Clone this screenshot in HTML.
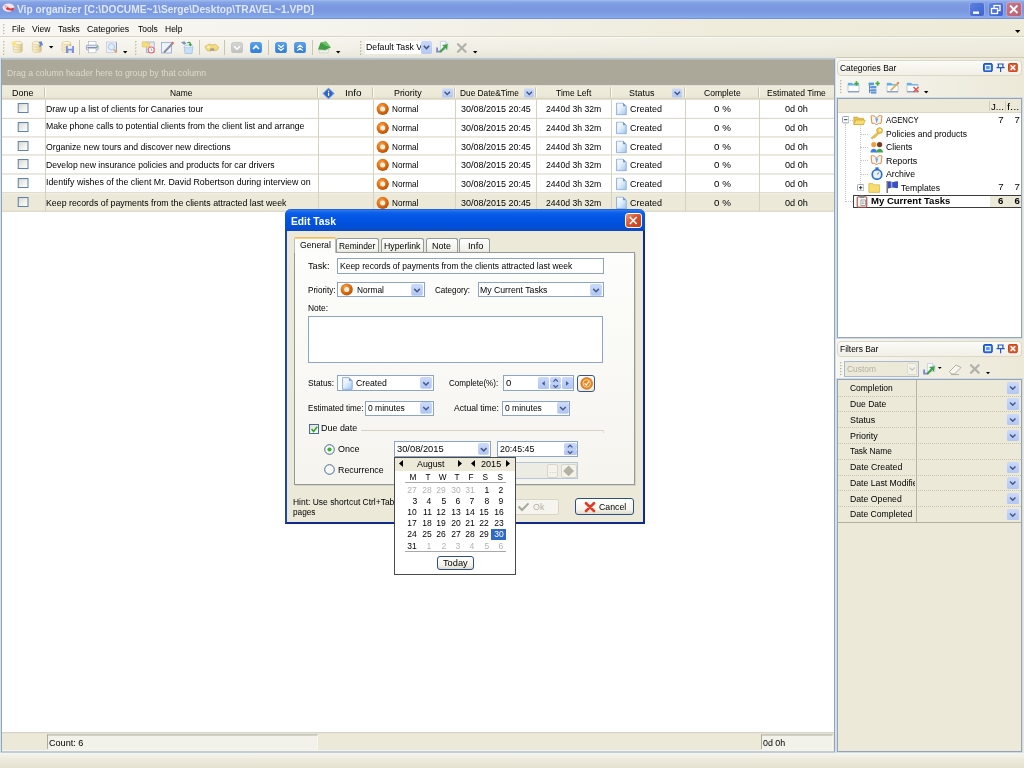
<!DOCTYPE html>
<html><head><meta charset="utf-8"><title>Vip organizer</title>
<style>
html,body{margin:0;padding:0;}
body{width:1024px;height:768px;overflow:hidden;background:#ece9d8;font-family:"Liberation Sans",sans-serif;position:relative;}
#r{position:absolute;left:0;top:0;width:1024px;height:768px;overflow:hidden;will-change:transform;}
#r div,#r span,#r svg{position:absolute;box-sizing:border-box;}
#r span{display:block;}
</style></head><body><div id="r">
<div style="left:0px;top:0px;width:1024px;height:19px;background:linear-gradient(#a3bdee 0,#86a5e6 2px,#7b98e0 6px,#7a97df 11px,#80a2e6 15px,#86aaea 17.6px,#7492da 18.4px,#7492da 19px);"></div>
<span style="left:16.75px;top:3px;font-size:10px;line-height:13px;color:#dfe8fa;white-space:pre;font-weight:bold;transform:scaleX(1.0190);transform-origin:0 50%;">Vip organizer [C:\DOCUME~1\Serge\Desktop\TRAVEL~1.VPD]</span>
<svg style="left:1.5px;top:3.2px;" width="14" height="10" viewBox="0 0 14 10"><ellipse cx="6.5" cy="4.6" rx="6" ry="4.2" fill="#f1e4ea"/><path d="M2.5 2.6 L8.5 5.6 L12.5 4.6 L11 8 L4.5 6.8 Z" fill="#d63a44"/><circle cx="4" cy="3.6" r="1.6" fill="#eeb4bc"/></svg>
<div style="left:969px;top:2px;width:15.5px;height:14.5px;background:linear-gradient(135deg,#5b82e0,#3f62cf);border:1px solid rgba(200,214,245,.55);border-radius:3px;"></div>
<svg style="left:969px;top:2px;" width="15.5" height="14.5" viewBox="0 0 15.5 14.5"><rect x="4" y="9.5" width="6" height="2.4" fill="#fff"/></svg>
<div style="left:988px;top:2px;width:15.5px;height:14.5px;background:linear-gradient(135deg,#5b82e0,#3f62cf);border:1px solid rgba(200,214,245,.55);border-radius:3px;"></div>
<svg style="left:988px;top:2px;" width="15.5" height="14.5" viewBox="0 0 15.5 14.5"><rect x="6" y="3.5" width="6" height="5" fill="none" stroke="#fff" stroke-width="1.3"/><rect x="3.5" y="6.5" width="6" height="5" fill="#4a70d8" stroke="#fff" stroke-width="1.3"/></svg>
<div style="left:1006px;top:2px;width:15.5px;height:14.5px;background:linear-gradient(135deg,#c9788c,#b85e72);border:1px solid rgba(200,214,245,.55);border-radius:3px;"></div>
<svg style="left:1006px;top:2px;" width="15.5" height="14.5" viewBox="0 0 15.5 14.5"><path d="M4 3.5 L11.5 11 M11.5 3.5 L4 11" stroke="#fff" stroke-width="1.8"/></svg>
<div style="left:0px;top:19px;width:1024px;height:18px;background:linear-gradient(90deg,#f8f7f3 0,#f4f3ec 35%,#efecdc 70%,#eeebd9 100%);"></div>
<div style="left:0px;top:36px;width:1024px;height:1px;background:#d9d5c3;"></div>
<div style="left:0px;top:37px;width:1024px;height:1px;background:#fbfaf6;"></div>
<svg style="left:3.4px;top:24.2px;" width="3" height="13" viewBox="0 0 3 13"><rect x=".2" y="0.20" width="1.3" height="1.3" fill="#aeaa97"/><rect x="1" y="1.00" width="1" height="1" fill="#fff" opacity=".8"/><rect x=".2" y="3.10" width="1.3" height="1.3" fill="#aeaa97"/><rect x="1" y="3.90" width="1" height="1" fill="#fff" opacity=".8"/><rect x=".2" y="6.00" width="1.3" height="1.3" fill="#aeaa97"/><rect x="1" y="6.80" width="1" height="1" fill="#fff" opacity=".8"/><rect x=".2" y="8.90" width="1.3" height="1.3" fill="#aeaa97"/><rect x="1" y="9.70" width="1" height="1" fill="#fff" opacity=".8"/></svg>
<span style="left:11.75px;top:23px;font-size:9.6px;line-height:12px;color:#000;white-space:pre;transform:scaleX(0.8339);transform-origin:0 50%;">File</span>
<span style="left:32.15px;top:23px;font-size:9.6px;line-height:12px;color:#000;white-space:pre;transform:scaleX(0.8868);transform-origin:0 50%;">View</span>
<span style="left:57.95px;top:23px;font-size:9.6px;line-height:12px;color:#000;white-space:pre;transform:scaleX(0.8843);transform-origin:0 50%;">Tasks</span>
<span style="left:87.45px;top:23px;font-size:9.6px;line-height:12px;color:#000;white-space:pre;transform:scaleX(0.9090);transform-origin:0 50%;">Categories</span>
<span style="left:137.65px;top:23px;font-size:9.6px;line-height:12px;color:#000;white-space:pre;transform:scaleX(0.8835);transform-origin:0 50%;">Tools</span>
<span style="left:164.75px;top:23px;font-size:9.6px;line-height:12px;color:#000;white-space:pre;transform:scaleX(0.8863);transform-origin:0 50%;">Help</span>
<svg style="left:1015px;top:29.5px;" width="6" height="4" viewBox="0 0 6 4"><path d="M0 0 H5.4 L2.7 3 Z" fill="#000"/></svg>
<div style="left:0px;top:38px;width:1024px;height:20px;background:linear-gradient(#f4f3ea 0,#efede2 60%,#e6e3d2 100%);"></div>
<div style="left:0px;top:38px;width:1024px;height:20px;background:linear-gradient(90deg,rgba(255,255,255,.35) 0,rgba(255,255,255,.05) 45%,rgba(236,233,216,.5) 100%);"></div>
<div style="left:0px;top:57px;width:1024px;height:1px;background:#cfcab6;"></div>
<svg style="left:3.2px;top:41.3px;" width="3" height="17.5" viewBox="0 0 3 17.5"><rect x=".2" y="0.20" width="1.3" height="1.3" fill="#a9a592"/><rect x="1" y="1.00" width="1" height="1" fill="#fbfaf6" opacity=".8"/><rect x=".2" y="3.30" width="1.3" height="1.3" fill="#a9a592"/><rect x="1" y="4.10" width="1" height="1" fill="#fbfaf6" opacity=".8"/><rect x=".2" y="6.40" width="1.3" height="1.3" fill="#a9a592"/><rect x="1" y="7.20" width="1" height="1" fill="#fbfaf6" opacity=".8"/><rect x=".2" y="9.50" width="1.3" height="1.3" fill="#a9a592"/><rect x="1" y="10.30" width="1" height="1" fill="#fbfaf6" opacity=".8"/><rect x=".2" y="12.60" width="1.3" height="1.3" fill="#a9a592"/><rect x="1" y="13.40" width="1" height="1" fill="#fbfaf6" opacity=".8"/></svg>
<svg style="left:10px;top:40px;" width="14" height="15" viewBox="0 0 14 15"><g transform="translate(2.9,1)"><defs><linearGradient id="dbg" x1="0" y1="0" x2="1" y2="0"><stop offset="0" stop-color="#fbf5dc"/><stop offset=".55" stop-color="#f2e4b2"/><stop offset="1" stop-color="#d6c18a"/></linearGradient></defs><path d="M0.4 2 V10 C0.4 12 9.4 12 9.4 10 V2 Z" fill="url(#dbg)" stroke="#cdbb88" stroke-width=".5"/><ellipse cx="4.9" cy="2" rx="4.5" ry="1.7" fill="#fbf4d6" stroke="#cdbb88" stroke-width=".5"/><path d="M0.4 4.9 C0.4 6.6 9.4 6.6 9.4 4.9 M0.4 7.6 C0.4 9.3 9.4 9.3 9.4 7.6" fill="none" stroke="#d4c392" stroke-width=".55"/></g><circle cx="3.8" cy="3.6" r="2.3" fill="#f8e678" opacity=".9"/></svg>
<svg style="left:30px;top:40px;" width="15" height="15" viewBox="0 0 15 15"><g transform="translate(2,1)"><defs><linearGradient id="dbg" x1="0" y1="0" x2="1" y2="0"><stop offset="0" stop-color="#fbf5dc"/><stop offset=".55" stop-color="#f2e4b2"/><stop offset="1" stop-color="#d6c18a"/></linearGradient></defs><path d="M0.4 2 V10 C0.4 12 9.4 12 9.4 10 V2 Z" fill="url(#dbg)" stroke="#cdbb88" stroke-width=".5"/><ellipse cx="4.9" cy="2" rx="4.5" ry="1.7" fill="#fbf4d6" stroke="#cdbb88" stroke-width=".5"/><path d="M0.4 4.9 C0.4 6.6 9.4 6.6 9.4 4.9 M0.4 7.6 C0.4 9.3 9.4 9.3 9.4 7.6" fill="none" stroke="#d4c392" stroke-width=".55"/></g><path d="M8.2 2.2 L11.6 1.2 L13.2 5.4 L11.6 5 L10.4 7 L9 6.2 L10.2 4.2 Z" fill="#5f86d2"/></svg>
<svg style="left:48.6px;top:45.6px;" width="5.4" height="3.6" viewBox="0 0 5.4 3.6"><path d="M0 0 H4.4 L2.2 2.6 Z" fill="#000"/></svg>
<svg style="left:60px;top:40px;" width="16" height="15" viewBox="0 0 16 15"><g transform="translate(1.6,1)"><defs><linearGradient id="dbg" x1="0" y1="0" x2="1" y2="0"><stop offset="0" stop-color="#fbf5dc"/><stop offset=".55" stop-color="#f2e4b2"/><stop offset="1" stop-color="#d6c18a"/></linearGradient></defs><path d="M0.4 2 V10 C0.4 12 9.4 12 9.4 10 V2 Z" fill="url(#dbg)" stroke="#cdbb88" stroke-width=".5"/><ellipse cx="4.9" cy="2" rx="4.5" ry="1.7" fill="#fbf4d6" stroke="#cdbb88" stroke-width=".5"/><path d="M0.4 4.9 C0.4 6.6 9.4 6.6 9.4 4.9 M0.4 7.6 C0.4 9.3 9.4 9.3 9.4 7.6" fill="none" stroke="#d4c392" stroke-width=".55"/></g><rect x="6" y="6" width="8" height="7" fill="#7f8fd8"/><rect x="7.8" y="6" width="4.4" height="2.8" fill="#eef0fa"/><rect x="8.4" y="10.4" width="3.4" height="2.6" fill="#e4e8f6"/></svg>
<div style="left:79px;top:40px;width:1px;height:15px;background:#c9c5b2;"></div>
<svg style="left:85px;top:40px;" width="15" height="15" viewBox="0 0 15 15"><rect x="3.6" y="1.6" width="7.4" height="4" fill="#fff" stroke="#a8b2cc" stroke-width=".6"/><rect x="1.4" y="5.2" width="11.8" height="4.6" rx=".8" fill="#e6eaf3" stroke="#7f8db4" stroke-width=".7"/><path d="M2.4 7.6 H12.2" stroke="#6a78a4" stroke-width=".9"/><rect x="3.6" y="8.6" width="7.4" height="4.2" fill="#fff" stroke="#a8b2cc" stroke-width=".6"/><rect x="11.4" y="5.8" width="1.6" height="1.4" fill="#74c866"/></svg>
<svg style="left:105px;top:40px;" width="15" height="15" viewBox="0 0 15 15"><rect x="1.6" y="2" width="10" height="10.6" fill="#eef1f8" stroke="#b4bdd6" stroke-width=".6"/><path d="M11.4 2.4 V12.4" stroke="#7d88aa" stroke-width=".8"/><circle cx="6.4" cy="6.8" r="3.2" fill="#dcecf8" stroke="#a4c2e2" stroke-width=".9"/><path d="M8.8 9.6 L11.6 12.4" stroke="#e0a868" stroke-width="1.7"/></svg>
<svg style="left:123.4px;top:50.8px;" width="5.4" height="3.4" viewBox="0 0 5.4 3.4"><path d="M0 0 H4.4 L2.2 2.4 Z" fill="#000"/></svg>
<svg style="left:134.6px;top:41.3px;" width="3" height="17.5" viewBox="0 0 3 17.5"><rect x=".2" y="0.20" width="1.3" height="1.3" fill="#a9a592"/><rect x="1" y="1.00" width="1" height="1" fill="#fbfaf6" opacity=".8"/><rect x=".2" y="3.30" width="1.3" height="1.3" fill="#a9a592"/><rect x="1" y="4.10" width="1" height="1" fill="#fbfaf6" opacity=".8"/><rect x=".2" y="6.40" width="1.3" height="1.3" fill="#a9a592"/><rect x="1" y="7.20" width="1" height="1" fill="#fbfaf6" opacity=".8"/><rect x=".2" y="9.50" width="1.3" height="1.3" fill="#a9a592"/><rect x="1" y="10.30" width="1" height="1" fill="#fbfaf6" opacity=".8"/><rect x=".2" y="12.60" width="1.3" height="1.3" fill="#a9a592"/><rect x="1" y="13.40" width="1" height="1" fill="#fbfaf6" opacity=".8"/></svg>
<svg style="left:141px;top:40px;" width="15" height="15" viewBox="0 0 15 15"><rect x="5.6" y="2" width="7.6" height="10.6" fill="#e4e9f6" stroke="#93a3cc" stroke-width=".7"/><path d="M1.2 1.8 H5 L6 2.8 H8.8 V7 H1.2 Z" fill="#f4dd7a" stroke="#d4ba5c" stroke-width=".5"/><circle cx="10.2" cy="10" r="3" fill="#fff" stroke="#e66a74" stroke-width="1.1"/><path d="M10.2 8.4 V10.1 H11.4" stroke="#666" stroke-width=".6" fill="none"/></svg>
<svg style="left:160px;top:40px;" width="15" height="15" viewBox="0 0 15 15"><rect x="1.5" y="2.5" width="10" height="10.5" fill="#eef2fb" stroke="#8fa6d2" stroke-width=".8"/><path d="M4 11 L11.5 3 L13 4.4 L5.6 12.2 Z" fill="#8a8f9e"/><path d="M11.5 3 L12.6 1.6 L14 3 L13 4.4 Z" fill="#e2574c"/><path d="M4 11 L3.6 12.6 L5.6 12.2 Z" fill="#444"/></svg>
<svg style="left:180px;top:40px;" width="15" height="15" viewBox="0 0 15 15"><path d="M4 6.5 H13 L12 13.5 H5 Z" fill="#c9e0f4" stroke="#8db4dc" stroke-width=".6"/><ellipse cx="8.5" cy="6.5" rx="4.5" ry="1.3" fill="#e6f1fb" stroke="#8db4dc" stroke-width=".5"/><path d="M1 2.2 L4.5 1.2 L6.5 4 L4 4.8 Z" fill="#7f94c4"/><path d="M7 2.5 C9 0.8 11.5 2 11 4.2 L12.3 4.2 L10.3 6.4 L8.4 4.2 L9.6 4.2 C9.8 3 8.6 2.6 7.6 3.4 Z" fill="#3fa04a"/></svg>
<div style="left:199px;top:40px;width:1px;height:15px;background:#c9c5b2;"></div>
<svg style="left:204px;top:43px;" width="16" height="10" viewBox="0 0 16 10"><path d="M1 3.6 L5.4 1 L8.2 2 L11.4 1.2 L14.6 4 L13.6 6.8 L10.4 8 L8.4 6 L6.6 8.2 L3 7.6 Z" fill="#f3da7c" stroke="#c9a94e" stroke-width=".6"/><ellipse cx="8.2" cy="6.4" rx="2.4" ry="1.5" fill="#a9a48e"/><ellipse cx="4.4" cy="4.2" rx="1.6" ry="1.1" fill="#fbf0b8"/></svg>
<div style="left:224px;top:40px;width:1px;height:15px;background:#c9c5b2;"></div>
<svg style="left:231px;top:41.5px;" width="12" height="11.5" viewBox="0 0 12 11.5"><defs><linearGradient id="sq1" x1="0" y1="0" x2="0" y2="1"><stop offset="0" stop-color="#d6d6d6"/><stop offset="1" stop-color="#c0c0c0"/></linearGradient></defs><rect x=".5" y=".5" width="11" height="10.5" rx="2" fill="url(#sq1)" stroke="#c2c2c2" stroke-width=".8"/><path d="M3 4.2 L6 7.2 L9 4.2" fill="none" stroke="#fff" stroke-width="1.6"/></svg>
<svg style="left:250px;top:41.5px;" width="12" height="11.5" viewBox="0 0 12 11.5"><defs><linearGradient id="sq2" x1="0" y1="0" x2="0" y2="1"><stop offset="0" stop-color="#5aa4ee"/><stop offset="1" stop-color="#2d7bd6"/></linearGradient></defs><rect x=".5" y=".5" width="11" height="10.5" rx="2" fill="url(#sq2)" stroke="#4a8cdc" stroke-width=".8"/><path d="M3 7 L6 4 L9 7" fill="none" stroke="#fff" stroke-width="1.6"/></svg>
<div style="left:268px;top:40px;width:1px;height:15px;background:#c9c5b2;"></div>
<svg style="left:275px;top:41.5px;" width="12" height="11.5" viewBox="0 0 12 11.5"><defs><linearGradient id="sq3" x1="0" y1="0" x2="0" y2="1"><stop offset="0" stop-color="#5aa4ee"/><stop offset="1" stop-color="#2d7bd6"/></linearGradient></defs><rect x=".5" y=".5" width="11" height="10.5" rx="2" fill="url(#sq3)" stroke="#4a8cdc" stroke-width=".8"/><path d="M3.2 3 L6 5.4 L8.8 3 M3.2 6 L6 8.4 L8.8 6" fill="none" stroke="#fff" stroke-width="1.2"/></svg>
<svg style="left:294px;top:41.5px;" width="12" height="11.5" viewBox="0 0 12 11.5"><defs><linearGradient id="sq4" x1="0" y1="0" x2="0" y2="1"><stop offset="0" stop-color="#5aa4ee"/><stop offset="1" stop-color="#2d7bd6"/></linearGradient></defs><rect x=".5" y=".5" width="11" height="10.5" rx="2" fill="url(#sq4)" stroke="#4a8cdc" stroke-width=".8"/><path d="M3.2 5.6 L6 3.2 L8.8 5.6 M3.2 8.6 L6 6.2 L8.8 8.6" fill="none" stroke="#fff" stroke-width="1.2"/></svg>
<div style="left:312px;top:40px;width:1px;height:15px;background:#c9c5b2;"></div>
<svg style="left:317px;top:41px;" width="15" height="13" viewBox="0 0 15 13"><path d="M1 8.6 L3.6 1.6 L9 .6 L13.8 6.6 L8.4 9 Z" fill="#3f9e42"/><path d="M3.6 1.6 L9 .6 L13.8 6.6 L8.6 4.6 Z" fill="#6cc466"/><path d="M1.6 9 L8.4 9.4 L12 7.8 L11 12 L2.6 11.8 Z" fill="#f0f2ee" stroke="#b4bcb0" stroke-width=".5"/></svg>
<svg style="left:336px;top:50.8px;" width="5.4" height="3.4" viewBox="0 0 5.4 3.4"><path d="M0 0 H4.4 L2.2 2.4 Z" fill="#000"/></svg>
<svg style="left:359.6px;top:41.3px;" width="3" height="17.5" viewBox="0 0 3 17.5"><rect x=".2" y="0.20" width="1.3" height="1.3" fill="#a9a592"/><rect x="1" y="1.00" width="1" height="1" fill="#fbfaf6" opacity=".8"/><rect x=".2" y="3.30" width="1.3" height="1.3" fill="#a9a592"/><rect x="1" y="4.10" width="1" height="1" fill="#fbfaf6" opacity=".8"/><rect x=".2" y="6.40" width="1.3" height="1.3" fill="#a9a592"/><rect x="1" y="7.20" width="1" height="1" fill="#fbfaf6" opacity=".8"/><rect x=".2" y="9.50" width="1.3" height="1.3" fill="#a9a592"/><rect x="1" y="10.30" width="1" height="1" fill="#fbfaf6" opacity=".8"/><rect x=".2" y="12.60" width="1.3" height="1.3" fill="#a9a592"/><rect x="1" y="13.40" width="1" height="1" fill="#fbfaf6" opacity=".8"/></svg>
<div style="left:364.5px;top:40.5px;width:67.5px;height:13.5px;background:#fff;"></div>
<div style="left:364.5px;top:40px;width:56px;height:14px;overflow:hidden;"><span style="left:1.2px;top:1px;font-size:9.6px;line-height:12px;white-space:pre;color:#000;transform:scaleX(0.9098);transform-origin:0 50%;">Default Task View</span></div>
<div style="left:420.5px;top:41px;width:11px;height:12.5px;background:linear-gradient(#c8d7fa,#b4c8f4);border-radius:1.5px;"></div>
<svg style="left:420.5px;top:41px;" width="11" height="12.5" viewBox="0 0 11 12.5"><path d="M2.8 4.8 L5.5 7.6 L8.2 4.8" fill="none" stroke="#40557f" stroke-width="1.5"/></svg>
<svg style="left:435px;top:40px;" width="15" height="15" viewBox="0 0 15 15"><path d="M5.4 1.4 H10.6 L12.8 3.6 V9.6 H5.4 Z" fill="#f6f8fc" stroke="#b4bed8" stroke-width=".6"/><path d="M10.6 1.4 V3.6 H12.8" fill="#dfe6f4" stroke="#b4bed8" stroke-width=".5"/><path d="M1.2 7.6 V12.6 H5.8 V10.8 H3 V7.6 Z" fill="#7f84d6"/><path d="M4.6 11.2 L9 6.6 L7.4 5.2 L12.6 4.2 L11.8 9.4 L10.4 8 L6 12.6 Z" fill="#3fa646" stroke="#2f8a36" stroke-width=".3"/></svg>
<svg style="left:455.5px;top:41.5px;" width="12" height="12" viewBox="0 0 12 12"><path d="M2 2.2 L9.6 9.8 M9.6 2.2 L2 9.8" stroke="#b2b2ac" stroke-width="2.3" stroke-linecap="round"/></svg>
<svg style="left:473px;top:50.8px;" width="5.4" height="3.4" viewBox="0 0 5.4 3.4"><path d="M0 0 H4.4 L2.2 2.4 Z" fill="#000"/></svg>
<div style="left:0;top:0;width:1024px;height:768px;transform:translateY(0.45px);">
<div style="left:0px;top:57px;width:836px;height:696px;background:#fff;border:1px solid #d6e1ee;"></div>
<div style="left:1px;top:58px;width:834px;height:694px;border:1px solid #94a4b5;"></div>
<div style="left:2px;top:59px;width:832px;height:26px;background:#aca899;"></div>
<span style="left:7.25px;top:67px;font-size:9.6px;line-height:12px;color:#dcd9cb;white-space:pre;transform:scaleX(0.9060);transform-origin:0 50%;">Drag a column header here to group by that column</span>
<div style="left:2px;top:85px;width:832px;height:14px;background:linear-gradient(#efecdd 0,#ece9d8 70%,#e2decb 100%);"></div>
<div style="left:2px;top:98px;width:832px;height:1px;background:#d0ccb9;"></div>
<div style="left:44px;top:87px;width:1px;height:10px;background:#c8c4b0;"></div>
<div style="left:45px;top:87px;width:1px;height:10px;background:#fbfaf5;"></div>
<div style="left:317px;top:87px;width:1px;height:10px;background:#c8c4b0;"></div>
<div style="left:318px;top:87px;width:1px;height:10px;background:#fbfaf5;"></div>
<div style="left:372px;top:87px;width:1px;height:10px;background:#c8c4b0;"></div>
<div style="left:373px;top:87px;width:1px;height:10px;background:#fbfaf5;"></div>
<div style="left:454px;top:87px;width:1px;height:10px;background:#c8c4b0;"></div>
<div style="left:455px;top:87px;width:1px;height:10px;background:#fbfaf5;"></div>
<div style="left:535px;top:87px;width:1px;height:10px;background:#c8c4b0;"></div>
<div style="left:536px;top:87px;width:1px;height:10px;background:#fbfaf5;"></div>
<div style="left:610px;top:87px;width:1px;height:10px;background:#c8c4b0;"></div>
<div style="left:611px;top:87px;width:1px;height:10px;background:#fbfaf5;"></div>
<div style="left:683.5px;top:87px;width:1px;height:10px;background:#c8c4b0;"></div>
<div style="left:684.5px;top:87px;width:1px;height:10px;background:#fbfaf5;"></div>
<div style="left:757.5px;top:87px;width:1px;height:10px;background:#c8c4b0;"></div>
<div style="left:758.5px;top:87px;width:1px;height:10px;background:#fbfaf5;"></div>
<span style="left:12.25px;top:87px;font-size:9.6px;line-height:12px;color:#000;white-space:pre;transform:scaleX(0.9324);transform-origin:0 50%;">Done</span>
<span style="left:170.25px;top:87px;font-size:9.6px;line-height:12px;color:#000;white-space:pre;transform:scaleX(0.8747);transform-origin:0 50%;">Name</span>
<span style="left:344.75px;top:87px;font-size:9.6px;line-height:12px;color:#000;white-space:pre;transform:scaleX(1.0429);transform-origin:0 50%;">Info</span>
<span style="left:393.55px;top:87px;font-size:9.6px;line-height:12px;color:#000;white-space:pre;transform:scaleX(0.9240);transform-origin:0 50%;">Priority</span>
<span style="left:459.75px;top:87px;font-size:9.6px;line-height:12px;color:#000;white-space:pre;transform:scaleX(0.8670);transform-origin:0 50%;">Due Date&amp;Time</span>
<span style="left:556.35px;top:87px;font-size:9.6px;line-height:12px;color:#000;white-space:pre;transform:scaleX(0.8901);transform-origin:0 50%;">Time Left</span>
<span style="left:628.75px;top:87px;font-size:9.6px;line-height:12px;color:#000;white-space:pre;transform:scaleX(0.9333);transform-origin:0 50%;">Status</span>
<span style="left:703.75px;top:87px;font-size:9.6px;line-height:12px;color:#000;white-space:pre;transform:scaleX(0.8932);transform-origin:0 50%;">Complete</span>
<span style="left:766.75px;top:87px;font-size:9.6px;line-height:12px;color:#000;white-space:pre;transform:scaleX(0.8903);transform-origin:0 50%;">Estimated Time</span>
<div style="left:442px;top:88px;width:10.5px;height:9px;background:linear-gradient(#cbd9fb,#b3c7f3);border-radius:1.5px;"></div>
<svg style="left:442px;top:88px;" width="10.5" height="9" viewBox="0 0 10.5 9"><path d="M2.55 3.4 L5.25 6.1 L7.95 3.4" fill="none" stroke="#3f5584" stroke-width="1.4"/></svg>
<div style="left:523.7px;top:88px;width:10.5px;height:9px;background:linear-gradient(#cbd9fb,#b3c7f3);border-radius:1.5px;"></div>
<svg style="left:523.7px;top:88px;" width="10.5" height="9" viewBox="0 0 10.5 9"><path d="M2.55 3.4 L5.25 6.1 L7.95 3.4" fill="none" stroke="#3f5584" stroke-width="1.4"/></svg>
<div style="left:671.5px;top:88px;width:10.5px;height:9px;background:linear-gradient(#cbd9fb,#b3c7f3);border-radius:1.5px;"></div>
<svg style="left:671.5px;top:88px;" width="10.5" height="9" viewBox="0 0 10.5 9"><path d="M2.55 3.4 L5.25 6.1 L7.95 3.4" fill="none" stroke="#3f5584" stroke-width="1.4"/></svg>
<svg style="left:321.5px;top:86.5px;" width="13" height="12" viewBox="0 0 13 12"><path d="M6.5 .5 L12.3 6 L6.5 11.5 L.7 6 Z" fill="#3f78d8" stroke="#9bb8ec" stroke-width=".8"/><circle cx="6.5" cy="6" r="3.2" fill="#2b5fc4"/><rect x="5.9" y="5.2" width="1.3" height="3.2" fill="#fff"/><rect x="5.9" y="3.3" width="1.3" height="1.2" fill="#fff"/></svg>
<div style="left:2px;top:117px;width:832px;height:1px;background:#d6d2c2;transform:translateY(0.4px);"></div>
<svg style="left:16.5px;top:102.4px;" width="12" height="11.2" viewBox="0 0 12 11.2"><defs><linearGradient id="cb0" x1="0" y1="0" x2="1" y2="1"><stop offset="0" stop-color="#d8d8d0"/><stop offset=".6" stop-color="#f2f2ee"/><stop offset="1" stop-color="#ffffff"/></linearGradient></defs><rect x="1.2" y="1.1" width="9.8" height="9" fill="url(#cb0)" stroke="#5c7fa6" stroke-width="1"/></svg>
<span style="left:46.35px;top:103px;font-size:9.6px;line-height:12px;color:#000;white-space:pre;transform:scaleX(0.9099);transform-origin:0 50%;">Draw up a list of clients for Canaries tour</span>
<svg style="left:375.5px;top:102.2px;" width="13.5" height="13" viewBox="0 0 13.5 13"><defs><radialGradient id="og0" cx=".4" cy=".35" r=".7"><stop offset="0" stop-color="#f6a850"/><stop offset=".55" stop-color="#e07010"/><stop offset="1" stop-color="#b04c04"/></radialGradient></defs><circle cx="6.7" cy="6.5" r="6.1" fill="url(#og0)"/><circle cx="6.7" cy="6.5" r="2.5" fill="#fdf0e0"/></svg>
<span style="left:391.75px;top:103px;font-size:9.6px;line-height:12px;color:#000;white-space:pre;transform:scaleX(0.8533);transform-origin:0 50%;">Normal</span>
<span style="left:460.75px;top:103px;font-size:9.6px;line-height:12px;color:#000;white-space:pre;transform:scaleX(0.9353);transform-origin:0 50%;">30/08/2015 20:45</span>
<span style="left:546.45px;top:103px;font-size:9.6px;line-height:12px;color:#000;white-space:pre;transform:scaleX(0.8992);transform-origin:0 50%;">2440d 3h 32m</span>
<svg style="left:615.5px;top:102.2px;" width="11" height="13" viewBox="0 0 11 13"><defs><linearGradient id="dg0" x1="0" y1="0" x2="1" y2="1"><stop offset="0" stop-color="#ffffff"/><stop offset=".45" stop-color="#e4f0fc"/><stop offset="1" stop-color="#9cc6f0"/></linearGradient></defs><path d="M.6 .6 H7 L10.2 3.8 V12.3 H.6 Z" fill="url(#dg0)" stroke="#86a8d8" stroke-width=".9"/><path d="M7 .6 L10.2 3.8 H7 Z" fill="#6f9ad6"/></svg>
<span style="left:629.75px;top:103px;font-size:9.6px;line-height:12px;color:#000;white-space:pre;transform:scaleX(0.9340);transform-origin:0 50%;">Created</span>
<span style="left:713.55px;top:103px;font-size:9.6px;line-height:12px;color:#000;white-space:pre;transform:scaleX(1.0216);transform-origin:0 50%;">0 %</span>
<span style="left:784.75px;top:103px;font-size:9.6px;line-height:12px;color:#000;white-space:pre;transform:scaleX(0.9532);transform-origin:0 50%;">0d 0h</span>
<div style="left:2px;top:136px;width:832px;height:1px;background:#d6d2c2;transform:translateY(0px);"></div>
<svg style="left:16.5px;top:121.4px;" width="12" height="11.2" viewBox="0 0 12 11.2"><defs><linearGradient id="cb1" x1="0" y1="0" x2="1" y2="1"><stop offset="0" stop-color="#d8d8d0"/><stop offset=".6" stop-color="#f2f2ee"/><stop offset="1" stop-color="#ffffff"/></linearGradient></defs><rect x="1.2" y="1.1" width="9.8" height="9" fill="url(#cb1)" stroke="#5c7fa6" stroke-width="1"/></svg>
<span style="left:46.35px;top:120px;font-size:9.6px;line-height:12px;color:#000;white-space:pre;transform:scaleX(0.9041);transform-origin:0 50%;">Make phone calls to potential clients from the client list and arrange</span>
<svg style="left:375.5px;top:121.2px;" width="13.5" height="13" viewBox="0 0 13.5 13"><defs><radialGradient id="og1" cx=".4" cy=".35" r=".7"><stop offset="0" stop-color="#f6a850"/><stop offset=".55" stop-color="#e07010"/><stop offset="1" stop-color="#b04c04"/></radialGradient></defs><circle cx="6.7" cy="6.5" r="6.1" fill="url(#og1)"/><circle cx="6.7" cy="6.5" r="2.5" fill="#fdf0e0"/></svg>
<span style="left:391.75px;top:122px;font-size:9.6px;line-height:12px;color:#000;white-space:pre;transform:scaleX(0.8533);transform-origin:0 50%;">Normal</span>
<span style="left:460.75px;top:122px;font-size:9.6px;line-height:12px;color:#000;white-space:pre;transform:scaleX(0.9353);transform-origin:0 50%;">30/08/2015 20:45</span>
<span style="left:546.45px;top:122px;font-size:9.6px;line-height:12px;color:#000;white-space:pre;transform:scaleX(0.8992);transform-origin:0 50%;">2440d 3h 32m</span>
<svg style="left:615.5px;top:121.2px;" width="11" height="13" viewBox="0 0 11 13"><defs><linearGradient id="dg1" x1="0" y1="0" x2="1" y2="1"><stop offset="0" stop-color="#ffffff"/><stop offset=".45" stop-color="#e4f0fc"/><stop offset="1" stop-color="#9cc6f0"/></linearGradient></defs><path d="M.6 .6 H7 L10.2 3.8 V12.3 H.6 Z" fill="url(#dg1)" stroke="#86a8d8" stroke-width=".9"/><path d="M7 .6 L10.2 3.8 H7 Z" fill="#6f9ad6"/></svg>
<span style="left:629.75px;top:122px;font-size:9.6px;line-height:12px;color:#000;white-space:pre;transform:scaleX(0.9340);transform-origin:0 50%;">Created</span>
<span style="left:713.55px;top:122px;font-size:9.6px;line-height:12px;color:#000;white-space:pre;transform:scaleX(1.0216);transform-origin:0 50%;">0 %</span>
<span style="left:784.75px;top:122px;font-size:9.6px;line-height:12px;color:#000;white-space:pre;transform:scaleX(0.9532);transform-origin:0 50%;">0d 0h</span>
<div style="left:2px;top:154px;width:832px;height:1px;background:#d6d2c2;transform:translateY(0px);"></div>
<svg style="left:16.5px;top:139.9px;" width="12" height="11.2" viewBox="0 0 12 11.2"><defs><linearGradient id="cb2" x1="0" y1="0" x2="1" y2="1"><stop offset="0" stop-color="#d8d8d0"/><stop offset=".6" stop-color="#f2f2ee"/><stop offset="1" stop-color="#ffffff"/></linearGradient></defs><rect x="1.2" y="1.1" width="9.8" height="9" fill="url(#cb2)" stroke="#5c7fa6" stroke-width="1"/></svg>
<span style="left:46.35px;top:141px;font-size:9.6px;line-height:12px;color:#000;white-space:pre;transform:scaleX(0.9042);transform-origin:0 50%;">Organize new tours and discover new directions</span>
<svg style="left:375.5px;top:139.7px;" width="13.5" height="13" viewBox="0 0 13.5 13"><defs><radialGradient id="og2" cx=".4" cy=".35" r=".7"><stop offset="0" stop-color="#f6a850"/><stop offset=".55" stop-color="#e07010"/><stop offset="1" stop-color="#b04c04"/></radialGradient></defs><circle cx="6.7" cy="6.5" r="6.1" fill="url(#og2)"/><circle cx="6.7" cy="6.5" r="2.5" fill="#fdf0e0"/></svg>
<span style="left:391.75px;top:141px;font-size:9.6px;line-height:12px;color:#000;white-space:pre;transform:scaleX(0.8533);transform-origin:0 50%;">Normal</span>
<span style="left:460.75px;top:141px;font-size:9.6px;line-height:12px;color:#000;white-space:pre;transform:scaleX(0.9353);transform-origin:0 50%;">30/08/2015 20:45</span>
<span style="left:546.45px;top:141px;font-size:9.6px;line-height:12px;color:#000;white-space:pre;transform:scaleX(0.8992);transform-origin:0 50%;">2440d 3h 32m</span>
<svg style="left:615.5px;top:139.7px;" width="11" height="13" viewBox="0 0 11 13"><defs><linearGradient id="dg2" x1="0" y1="0" x2="1" y2="1"><stop offset="0" stop-color="#ffffff"/><stop offset=".45" stop-color="#e4f0fc"/><stop offset="1" stop-color="#9cc6f0"/></linearGradient></defs><path d="M.6 .6 H7 L10.2 3.8 V12.3 H.6 Z" fill="url(#dg2)" stroke="#86a8d8" stroke-width=".9"/><path d="M7 .6 L10.2 3.8 H7 Z" fill="#6f9ad6"/></svg>
<span style="left:629.75px;top:141px;font-size:9.6px;line-height:12px;color:#000;white-space:pre;transform:scaleX(0.9340);transform-origin:0 50%;">Created</span>
<span style="left:713.55px;top:141px;font-size:9.6px;line-height:12px;color:#000;white-space:pre;transform:scaleX(1.0216);transform-origin:0 50%;">0 %</span>
<span style="left:784.75px;top:141px;font-size:9.6px;line-height:12px;color:#000;white-space:pre;transform:scaleX(0.9532);transform-origin:0 50%;">0d 0h</span>
<div style="left:2px;top:173px;width:832px;height:1px;background:#d6d2c2;transform:translateY(0px);"></div>
<svg style="left:16.5px;top:158.4px;" width="12" height="11.2" viewBox="0 0 12 11.2"><defs><linearGradient id="cb3" x1="0" y1="0" x2="1" y2="1"><stop offset="0" stop-color="#d8d8d0"/><stop offset=".6" stop-color="#f2f2ee"/><stop offset="1" stop-color="#ffffff"/></linearGradient></defs><rect x="1.2" y="1.1" width="9.8" height="9" fill="url(#cb3)" stroke="#5c7fa6" stroke-width="1"/></svg>
<span style="left:46.35px;top:159px;font-size:9.6px;line-height:12px;color:#000;white-space:pre;transform:scaleX(0.9008);transform-origin:0 50%;">Develop new insurance policies and products for car drivers</span>
<svg style="left:375.5px;top:158.2px;" width="13.5" height="13" viewBox="0 0 13.5 13"><defs><radialGradient id="og3" cx=".4" cy=".35" r=".7"><stop offset="0" stop-color="#f6a850"/><stop offset=".55" stop-color="#e07010"/><stop offset="1" stop-color="#b04c04"/></radialGradient></defs><circle cx="6.7" cy="6.5" r="6.1" fill="url(#og3)"/><circle cx="6.7" cy="6.5" r="2.5" fill="#fdf0e0"/></svg>
<span style="left:391.75px;top:159px;font-size:9.6px;line-height:12px;color:#000;white-space:pre;transform:scaleX(0.8533);transform-origin:0 50%;">Normal</span>
<span style="left:460.75px;top:159px;font-size:9.6px;line-height:12px;color:#000;white-space:pre;transform:scaleX(0.9353);transform-origin:0 50%;">30/08/2015 20:45</span>
<span style="left:546.45px;top:159px;font-size:9.6px;line-height:12px;color:#000;white-space:pre;transform:scaleX(0.8992);transform-origin:0 50%;">2440d 3h 32m</span>
<svg style="left:615.5px;top:158.2px;" width="11" height="13" viewBox="0 0 11 13"><defs><linearGradient id="dg3" x1="0" y1="0" x2="1" y2="1"><stop offset="0" stop-color="#ffffff"/><stop offset=".45" stop-color="#e4f0fc"/><stop offset="1" stop-color="#9cc6f0"/></linearGradient></defs><path d="M.6 .6 H7 L10.2 3.8 V12.3 H.6 Z" fill="url(#dg3)" stroke="#86a8d8" stroke-width=".9"/><path d="M7 .6 L10.2 3.8 H7 Z" fill="#6f9ad6"/></svg>
<span style="left:629.75px;top:159px;font-size:9.6px;line-height:12px;color:#000;white-space:pre;transform:scaleX(0.9340);transform-origin:0 50%;">Created</span>
<span style="left:713.55px;top:159px;font-size:9.6px;line-height:12px;color:#000;white-space:pre;transform:scaleX(1.0216);transform-origin:0 50%;">0 %</span>
<span style="left:784.75px;top:159px;font-size:9.6px;line-height:12px;color:#000;white-space:pre;transform:scaleX(0.9532);transform-origin:0 50%;">0d 0h</span>
<div style="left:2px;top:192px;width:832px;height:1px;background:#d6d2c2;transform:translateY(-0.2px);"></div>
<svg style="left:16.5px;top:177.4px;" width="12" height="11.2" viewBox="0 0 12 11.2"><defs><linearGradient id="cb4" x1="0" y1="0" x2="1" y2="1"><stop offset="0" stop-color="#d8d8d0"/><stop offset=".6" stop-color="#f2f2ee"/><stop offset="1" stop-color="#ffffff"/></linearGradient></defs><rect x="1.2" y="1.1" width="9.8" height="9" fill="url(#cb4)" stroke="#5c7fa6" stroke-width="1"/></svg>
<span style="left:46.35px;top:176px;font-size:9.6px;line-height:12px;color:#000;white-space:pre;transform:scaleX(0.9190);transform-origin:0 50%;">Identify wishes of the client Mr. David Robertson during interview on</span>
<svg style="left:375.5px;top:177.2px;" width="13.5" height="13" viewBox="0 0 13.5 13"><defs><radialGradient id="og4" cx=".4" cy=".35" r=".7"><stop offset="0" stop-color="#f6a850"/><stop offset=".55" stop-color="#e07010"/><stop offset="1" stop-color="#b04c04"/></radialGradient></defs><circle cx="6.7" cy="6.5" r="6.1" fill="url(#og4)"/><circle cx="6.7" cy="6.5" r="2.5" fill="#fdf0e0"/></svg>
<span style="left:391.75px;top:178px;font-size:9.6px;line-height:12px;color:#000;white-space:pre;transform:scaleX(0.8533);transform-origin:0 50%;">Normal</span>
<span style="left:460.75px;top:178px;font-size:9.6px;line-height:12px;color:#000;white-space:pre;transform:scaleX(0.9353);transform-origin:0 50%;">30/08/2015 20:45</span>
<span style="left:546.45px;top:178px;font-size:9.6px;line-height:12px;color:#000;white-space:pre;transform:scaleX(0.8992);transform-origin:0 50%;">2440d 3h 32m</span>
<svg style="left:615.5px;top:177.2px;" width="11" height="13" viewBox="0 0 11 13"><defs><linearGradient id="dg4" x1="0" y1="0" x2="1" y2="1"><stop offset="0" stop-color="#ffffff"/><stop offset=".45" stop-color="#e4f0fc"/><stop offset="1" stop-color="#9cc6f0"/></linearGradient></defs><path d="M.6 .6 H7 L10.2 3.8 V12.3 H.6 Z" fill="url(#dg4)" stroke="#86a8d8" stroke-width=".9"/><path d="M7 .6 L10.2 3.8 H7 Z" fill="#6f9ad6"/></svg>
<span style="left:629.75px;top:178px;font-size:9.6px;line-height:12px;color:#000;white-space:pre;transform:scaleX(0.9340);transform-origin:0 50%;">Created</span>
<span style="left:713.55px;top:178px;font-size:9.6px;line-height:12px;color:#000;white-space:pre;transform:scaleX(1.0216);transform-origin:0 50%;">0 %</span>
<span style="left:784.75px;top:178px;font-size:9.6px;line-height:12px;color:#000;white-space:pre;transform:scaleX(0.9532);transform-origin:0 50%;">0d 0h</span>
<div style="left:2px;top:193px;width:832px;height:18px;background:#ece9d8;"></div>
<div style="left:2px;top:210px;width:832px;height:1px;background:#d6d2c2;transform:translateY(0.3px);"></div>
<svg style="left:16.5px;top:195.9px;" width="12" height="11.2" viewBox="0 0 12 11.2"><defs><linearGradient id="cb5" x1="0" y1="0" x2="1" y2="1"><stop offset="0" stop-color="#d8d8d0"/><stop offset=".6" stop-color="#f2f2ee"/><stop offset="1" stop-color="#ffffff"/></linearGradient></defs><rect x="1.2" y="1.1" width="9.8" height="9" fill="url(#cb5)" stroke="#5c7fa6" stroke-width="1"/></svg>
<span style="left:46.35px;top:197px;font-size:9.6px;line-height:12px;color:#000;white-space:pre;transform:scaleX(0.9165);transform-origin:0 50%;">Keep records of payments from the clients attracted last week</span>
<svg style="left:375.5px;top:195.7px;" width="13.5" height="13" viewBox="0 0 13.5 13"><defs><radialGradient id="og5" cx=".4" cy=".35" r=".7"><stop offset="0" stop-color="#f6a850"/><stop offset=".55" stop-color="#e07010"/><stop offset="1" stop-color="#b04c04"/></radialGradient></defs><circle cx="6.7" cy="6.5" r="6.1" fill="url(#og5)"/><circle cx="6.7" cy="6.5" r="2.5" fill="#fdf0e0"/></svg>
<span style="left:391.75px;top:197px;font-size:9.6px;line-height:12px;color:#000;white-space:pre;transform:scaleX(0.8533);transform-origin:0 50%;">Normal</span>
<span style="left:460.75px;top:197px;font-size:9.6px;line-height:12px;color:#000;white-space:pre;transform:scaleX(0.9353);transform-origin:0 50%;">30/08/2015 20:45</span>
<span style="left:546.45px;top:197px;font-size:9.6px;line-height:12px;color:#000;white-space:pre;transform:scaleX(0.8992);transform-origin:0 50%;">2440d 3h 32m</span>
<svg style="left:615.5px;top:195.7px;" width="11" height="13" viewBox="0 0 11 13"><defs><linearGradient id="dg5" x1="0" y1="0" x2="1" y2="1"><stop offset="0" stop-color="#ffffff"/><stop offset=".45" stop-color="#e4f0fc"/><stop offset="1" stop-color="#9cc6f0"/></linearGradient></defs><path d="M.6 .6 H7 L10.2 3.8 V12.3 H.6 Z" fill="url(#dg5)" stroke="#86a8d8" stroke-width=".9"/><path d="M7 .6 L10.2 3.8 H7 Z" fill="#6f9ad6"/></svg>
<span style="left:629.75px;top:197px;font-size:9.6px;line-height:12px;color:#000;white-space:pre;transform:scaleX(0.9340);transform-origin:0 50%;">Created</span>
<span style="left:713.55px;top:197px;font-size:9.6px;line-height:12px;color:#000;white-space:pre;transform:scaleX(1.0216);transform-origin:0 50%;">0 %</span>
<span style="left:784.75px;top:197px;font-size:9.6px;line-height:12px;color:#000;white-space:pre;transform:scaleX(0.9532);transform-origin:0 50%;">0d 0h</span>
<div style="left:45px;top:99px;width:1px;height:112px;background:#d6d2c2;"></div>
<div style="left:318px;top:99px;width:1px;height:112px;background:#d6d2c2;"></div>
<div style="left:373px;top:99px;width:1px;height:112px;background:#d6d2c2;"></div>
<div style="left:455px;top:99px;width:1px;height:112px;background:#d6d2c2;"></div>
<div style="left:536px;top:99px;width:1px;height:112px;background:#d6d2c2;"></div>
<div style="left:611px;top:99px;width:1px;height:112px;background:#d6d2c2;"></div>
<div style="left:684.5px;top:99px;width:1px;height:112px;background:#d6d2c2;"></div>
<div style="left:758.5px;top:99px;width:1px;height:112px;background:#d6d2c2;"></div>
<div style="left:2px;top:732px;width:832px;height:1px;background:#b5b1a0;"></div>
<div style="left:2px;top:733px;width:832px;height:17px;background:#ece9d8;"></div>
<div style="left:47px;top:734px;width:271px;height:15px;background:#f2f1ea;border:1px solid #f8f7f2;border-top-color:#aeaa9b;border-left-color:#aeaa9b;"></div>
<span style="left:48.75px;top:737px;font-size:9.6px;line-height:12px;color:#000;white-space:pre;transform:scaleX(0.9479);transform-origin:0 50%;">Count: 6</span>
<div style="left:761px;top:734px;width:71.5px;height:15px;background:#f2f1ea;border:1px solid #f8f7f2;border-top-color:#aeaa9b;border-left-color:#aeaa9b;"></div>
<span style="left:763.45px;top:737px;font-size:9.6px;line-height:12px;color:#000;white-space:pre;transform:scaleX(0.9241);transform-origin:0 50%;">0d 0h</span>
</div>
<div style="left:0px;top:753px;width:1024px;height:15px;background:linear-gradient(#f6f5ee 0,#efecdf 35%,#e4e1cf 100%);"></div>
<div style="left:836px;top:58px;width:188px;height:695px;background:linear-gradient(90deg,#f7f6f1 0,#f2f0e6 40%,#ece9d8 100%);"></div>
<div style="left:837px;top:59.5px;width:185px;height:16px;background:linear-gradient(#fbfbf8,#f1efe6);border:1px solid #dcd8c6;border-radius:4px;"></div>
<span style="left:839.75px;top:62px;font-size:9.6px;line-height:12px;color:#000;white-space:pre;transform:scaleX(0.8792);transform-origin:0 50%;">Categories Bar</span>
<svg style="left:982.7px;top:62.9px;" width="10" height="9.4" viewBox="0 0 10 9.4"><rect x=".5" y=".5" width="8.8" height="8.2" rx="1.3" fill="#2f6fe0" stroke="#1f55c0"/><rect x="2.6" y="2.5" width="4.6" height="4.2" fill="#5f97f0" stroke="#fff" stroke-width="1"/></svg>
<svg style="left:996px;top:62.9px;" width="9.5" height="9.6" viewBox="0 0 9.5 9.6"><path d="M1.4 1 H7.8 M2.5 1 L2.2 4.4 M6.7 1 L7 4.4 M.5 4.6 H8.7 M4.6 4.6 V9.2" fill="none" stroke="#2458c4" stroke-width="1.2"/></svg>
<svg style="left:1008.4px;top:62.9px;" width="10" height="9.4" viewBox="0 0 10 9.4"><rect x=".5" y=".5" width="8.8" height="8.2" rx="1.1" fill="#e2592d" stroke="#c2431c"/><path d="M2.6 2.3 L7.2 6.9 M7.2 2.3 L2.6 6.9" stroke="#fff" stroke-width="1.6"/></svg>
<svg style="left:840px;top:79.6px;" width="3" height="16.5" viewBox="0 0 3 16.5"><rect x=".2" y="0.20" width="1.3" height="1.3" fill="#a9a592"/><rect x="1" y="1.00" width="1" height="1" fill="#fbfaf6" opacity=".8"/><rect x=".2" y="3.10" width="1.3" height="1.3" fill="#a9a592"/><rect x="1" y="3.90" width="1" height="1" fill="#fbfaf6" opacity=".8"/><rect x=".2" y="6.00" width="1.3" height="1.3" fill="#a9a592"/><rect x="1" y="6.80" width="1" height="1" fill="#fbfaf6" opacity=".8"/><rect x=".2" y="8.90" width="1.3" height="1.3" fill="#a9a592"/><rect x="1" y="9.70" width="1" height="1" fill="#fbfaf6" opacity=".8"/><rect x=".2" y="11.80" width="1.3" height="1.3" fill="#a9a592"/><rect x="1" y="12.60" width="1" height="1" fill="#fbfaf6" opacity=".8"/></svg>
<svg style="left:847px;top:81px;" width="14" height="13" viewBox="0 0 14 13"><path d="M1 2.2 H5 L6 3.4 H12 V10.8 H1 Z" fill="#fdfdfd" stroke="#9fb3cf" stroke-width=".6"/><path d="M1 2 H5.2 L6.2 3.3 H12 V4.6 H1 Z" fill="#5fb0ea"/><path d="M1 10.8 H12" stroke="#6a8cc4" stroke-width="1"/><path d="M9.5 .3 V4.7 M7.3 2.5 H11.7" stroke="#3fae3f" stroke-width="1.7"/></svg>
<svg style="left:867px;top:81px;" width="14" height="13" viewBox="0 0 14 13"><rect x="1.6" y="1.6" width="5.4" height="2.6" fill="#4f9fe6"/><rect x="3.8" y="5" width="5.6" height="2.4" fill="#5f97dc"/><rect x="3.8" y="8.2" width="5.6" height="2.4" fill="#5f97dc"/><rect x="3.8" y="11" width="5.6" height="1.6" fill="#5f97dc"/><path d="M2.6 4 V12 M2.6 6.2 H4 M2.6 9.4 H4" stroke="#3f74c4" stroke-width=".9" fill="none"/><path d="M10.6 .3 V4.7 M8.4 2.5 H12.8" stroke="#3fae3f" stroke-width="1.7"/></svg>
<svg style="left:886px;top:81px;" width="14" height="13" viewBox="0 0 14 13"><path d="M1 2.2 H5 L6 3.4 H12 V10.8 H1 Z" fill="#fdfdfd" stroke="#9fb3cf" stroke-width=".6"/><path d="M1 2 H5.2 L6.2 3.3 H12 V4.6 H1 Z" fill="#5fb0ea"/><path d="M1 10.8 H12" stroke="#6a8cc4" stroke-width="1"/><path d="M4 9 L11 1.8 L12.4 3 L5.4 10 Z" fill="#e0b050"/><path d="M11 1.8 L12 .8 L13.4 2 L12.4 3 Z" fill="#e0574c"/></svg>
<svg style="left:906px;top:81px;" width="14" height="13" viewBox="0 0 14 13"><path d="M1 2.2 H5 L6 3.4 H12 V10.8 H1 Z" fill="#fdfdfd" stroke="#9fb3cf" stroke-width=".6"/><path d="M1 2 H5.2 L6.2 3.3 H12 V4.6 H1 Z" fill="#5fb0ea"/><path d="M1 10.8 H12" stroke="#6a8cc4" stroke-width="1"/><path d="M7.5 6 L12.5 11 M12.5 6 L7.5 11" stroke="#e2574c" stroke-width="1.5"/></svg>
<svg style="left:923.6px;top:91.2px;" width="5.4" height="3.4" viewBox="0 0 5.4 3.4"><path d="M0 0 H4.4 L2.2 2.4 Z" fill="#000"/></svg>
<div style="left:836px;top:97px;width:187px;height:242px;background:#fff;border:1px solid #cfdcea;"></div>
<div style="left:837px;top:98px;width:185px;height:240px;border:1px solid #94a4b5;"></div>
<div style="left:838px;top:99px;width:183px;height:13px;background:#ece9d8;"></div>
<div style="left:838px;top:112px;width:182.5px;height:1px;background:#dad6c4;"></div>
<div style="left:988.5px;top:101px;width:1px;height:10px;background:#cfcbb8;"></div>
<div style="left:1005px;top:101px;width:1px;height:10px;background:#cfcbb8;"></div>
<span style="left:990.75px;top:101px;font-size:9.6px;line-height:12px;color:#000;white-space:pre;transform:scaleX(1.0077);transform-origin:0 50%;">J...</span>
<span style="left:1007.25px;top:101px;font-size:9.6px;line-height:12px;color:#000;white-space:pre;transform:scaleX(1.1500);transform-origin:0 50%;">f...</span>
<div style="left:844.5px;top:124px;width:0px;height:78px;border-left:1px dotted #c9c7bd;"></div>
<div style="left:844.5px;top:201px;width:8px;height:0px;border-top:1px dotted #c9c7bd;"></div>
<div style="left:859.5px;top:126px;width:0px;height:61px;border-left:1px dotted #c9c7bd;"></div>
<div style="left:860px;top:133.5px;width:8px;height:0px;border-top:1px dotted #c9c7bd;"></div>
<div style="left:860px;top:147px;width:8px;height:0px;border-top:1px dotted #c9c7bd;"></div>
<div style="left:860px;top:160.3px;width:8px;height:0px;border-top:1px dotted #c9c7bd;"></div>
<div style="left:860px;top:173.8px;width:8px;height:0px;border-top:1px dotted #c9c7bd;"></div>
<div style="left:848px;top:120px;width:5px;height:0px;border-top:1px dotted #c9c7bd;"></div>
<svg style="left:841.5px;top:116.3px;" width="7.4" height="7.4" viewBox="0 0 7.4 7.4"><rect x=".5" y=".5" width="6.4" height="6.4" rx="1" fill="#fff" stroke="#8c9bb2" stroke-width=".9"/><path d="M2 3.7 H5.4" stroke="#222" stroke-width=".9"/></svg>
<svg style="left:856.5px;top:183.5px;" width="7.4" height="7.4" viewBox="0 0 7.4 7.4"><rect x=".5" y=".5" width="6.4" height="6.4" rx="1" fill="#fff" stroke="#8c9bb2" stroke-width=".9"/><path d="M2 3.7 H5.4" stroke="#222" stroke-width=".9"/><path d="M3.7 2 V5.4" stroke="#222" stroke-width=".9"/></svg>
<svg style="left:852.5px;top:114px;" width="13" height="12" viewBox="0 0 13 12"><path d="M.8 3 H4.6 L5.6 4.2 H10.5 V10.5 H.8 Z" fill="#e9c24a" stroke="#b99528" stroke-width=".5"/><path d="M2.6 6 H12.3 L10.5 10.6 H.8 Z" fill="#f7dc6e" stroke="#b99528" stroke-width=".5"/></svg>
<svg style="left:870px;top:113.5px;" width="13.5" height="12" viewBox="0 0 13.5 12"><path d="M1 2 C3 1 5 2 6.5 4 C8 2 10 1 12 2 L11 9.5 C9 9 7.5 9.6 6.5 11 C5.5 9.6 4 9 2 9.5 Z" fill="#fbf4ee" stroke="#e08a4a" stroke-width="1"/><path d="M5.2 4 L6.5 9.5 L8.4 4.5 Z" fill="#6fa8e0"/></svg>
<svg style="left:870px;top:127px;" width="13.5" height="12.5" viewBox="0 0 13.5 12.5"><circle cx="9.6" cy="3.6" r="2.9" fill="#f4cf5a" stroke="#c79a22" stroke-width=".8"/><circle cx="10.2" cy="3" r=".9" fill="#fff"/><path d="M7.6 5.2 L1 11 L2.6 12 L3.4 10.6 L4.6 11 L8.8 6.8 Z" fill="#eec04a" stroke="#c79a22" stroke-width=".5"/></svg>
<svg style="left:870px;top:140.5px;" width="13.5" height="12.5" viewBox="0 0 13.5 12.5"><circle cx="3.8" cy="3.6" r="2.6" fill="#f0a040"/><circle cx="9.6" cy="3.6" r="2.6" fill="#7a3a1c"/><path d="M0.5 11.5 C0.5 6.5 7 6.5 7 11.5 Z" fill="#3f7fe0"/><path d="M6.4 11.5 C6.4 6.5 13 6.5 13 11.5 Z" fill="#3fa84a"/></svg>
<svg style="left:870px;top:154px;" width="13.5" height="12" viewBox="0 0 13.5 12"><path d="M1 2 C3 1 5 2 6.5 4 C8 2 10 1 12 2 L11 9.5 C9 9 7.5 9.6 6.5 11 C5.5 9.6 4 9 2 9.5 Z" fill="#fbf4ee" stroke="#e08a4a" stroke-width="1"/><path d="M5.2 4 L6.5 9.5 L8.4 4.5 Z" fill="#6fa8e0"/></svg>
<svg style="left:870.5px;top:167px;" width="12.5" height="13" viewBox="0 0 12.5 13"><circle cx="6" cy="7.4" r="4.8" fill="#e6f0fb" stroke="#2f6fd0" stroke-width="1.7"/><rect x="4.4" y=".3" width="3.2" height="2" fill="#2f6fd0"/><path d="M6 7.4 L8.2 5.4" stroke="#555" stroke-width=".8"/></svg>
<svg style="left:867.5px;top:181.5px;" width="13" height="11.5" viewBox="0 0 13 11.5"><path d="M.8 1.6 H4.8 L5.8 2.8 H11.6 V10.4 H.8 Z" fill="#f7dc6e" stroke="#c9a73a" stroke-width=".6"/></svg>
<svg style="left:885.5px;top:180px;" width="13" height="13.5" viewBox="0 0 13 13.5"><path d="M1.2 1 V13" stroke="#6a6a6a" stroke-width="1.4"/><path d="M2 1.6 C4.5 .2 6.5 3 9 1.6 L12 1.2 V7.8 C9.5 9 7 6.6 4.5 8 L2 8.4 Z" fill="#3a4fc0"/><path d="M5.6 1.8 V7.6" stroke="#9aa8ee" stroke-width="1.4"/></svg>
<div style="left:852.5px;top:194.5px;width:168.5px;height:13.3px;background:#fff;border:1px solid #3c3c3c;"></div>
<div style="left:989.5px;top:195.5px;width:31px;height:11.3px;background:#ece9d8;"></div>
<svg style="left:855.5px;top:194.5px;" width="12" height="13" viewBox="0 0 12 13"><rect x="1.2" y="1.8" width="9.6" height="10.4" rx="1" fill="#f4f4f4" stroke="#a03a34" stroke-width="1"/><rect x="3.8" y=".6" width="4.4" height="2.4" fill="#8a8a8a"/><rect x="5" y="5" width="4.4" height="5.6" fill="#fff" stroke="#666" stroke-width=".6"/><path d="M6 7 H8.4 M6 8.6 H8.4" stroke="#555" stroke-width=".5"/></svg>
<span style="left:885.55px;top:114px;font-size:9.6px;line-height:12px;color:#000;white-space:pre;transform:scaleX(0.8065);transform-origin:0 50%;">AGENCY</span>
<span style="left:885.55px;top:128px;font-size:9.6px;line-height:12px;color:#000;white-space:pre;transform:scaleX(0.8876);transform-origin:0 50%;">Policies and products</span>
<span style="left:885.55px;top:141px;font-size:9.6px;line-height:12px;color:#000;white-space:pre;transform:scaleX(0.8997);transform-origin:0 50%;">Clients</span>
<span style="left:885.55px;top:155px;font-size:9.6px;line-height:12px;color:#000;white-space:pre;transform:scaleX(0.9252);transform-origin:0 50%;">Reports</span>
<span style="left:885.55px;top:168px;font-size:9.6px;line-height:12px;color:#000;white-space:pre;transform:scaleX(0.9090);transform-origin:0 50%;">Archive</span>
<span style="left:901.45px;top:182px;font-size:9.6px;line-height:12px;color:#000;white-space:pre;transform:scaleX(0.8959);transform-origin:0 50%;">Templates</span>
<span style="left:871.45px;top:195px;font-size:9.6px;line-height:12px;color:#000;white-space:pre;font-weight:bold;transform:scaleX(0.9944);transform-origin:0 50%;">My Current Tasks</span>
<span style="left:998.2px;top:114px;font-size:9.6px;line-height:12px;color:#000;white-space:pre;">7</span>
<span style="left:1014.6px;top:114px;font-size:9.6px;line-height:12px;color:#000;white-space:pre;">7</span>
<span style="left:998.2px;top:181px;font-size:9.6px;line-height:12px;color:#000;white-space:pre;">7</span>
<span style="left:1014.6px;top:181px;font-size:9.6px;line-height:12px;color:#000;white-space:pre;">7</span>
<span style="left:998px;top:195px;font-size:9.6px;line-height:12px;color:#000;white-space:pre;font-weight:bold;">6</span>
<span style="left:1014.4px;top:195px;font-size:9.6px;line-height:12px;color:#000;white-space:pre;font-weight:bold;">6</span>
<div style="left:837px;top:341px;width:185px;height:16px;background:linear-gradient(#fbfbf8,#f1efe6);border:1px solid #dcd8c6;border-radius:4px;"></div>
<span style="left:839.75px;top:343px;font-size:9.6px;line-height:12px;color:#000;white-space:pre;transform:scaleX(0.8756);transform-origin:0 50%;">Filters Bar</span>
<svg style="left:982.7px;top:344.4px;" width="10" height="9.4" viewBox="0 0 10 9.4"><rect x=".5" y=".5" width="8.8" height="8.2" rx="1.3" fill="#2f6fe0" stroke="#1f55c0"/><rect x="2.6" y="2.5" width="4.6" height="4.2" fill="#5f97f0" stroke="#fff" stroke-width="1"/></svg>
<svg style="left:996px;top:344.4px;" width="9.5" height="9.6" viewBox="0 0 9.5 9.6"><path d="M1.4 1 H7.8 M2.5 1 L2.2 4.4 M6.7 1 L7 4.4 M.5 4.6 H8.7 M4.6 4.6 V9.2" fill="none" stroke="#2458c4" stroke-width="1.2"/></svg>
<svg style="left:1008.4px;top:344.4px;" width="10" height="9.4" viewBox="0 0 10 9.4"><rect x=".5" y=".5" width="8.8" height="8.2" rx="1.1" fill="#e2592d" stroke="#c2431c"/><path d="M2.6 2.3 L7.2 6.9 M7.2 2.3 L2.6 6.9" stroke="#fff" stroke-width="1.6"/></svg>
<svg style="left:840px;top:362.4px;" width="3" height="16.5" viewBox="0 0 3 16.5"><rect x=".2" y="0.20" width="1.3" height="1.3" fill="#a9a592"/><rect x="1" y="1.00" width="1" height="1" fill="#fbfaf6" opacity=".8"/><rect x=".2" y="3.10" width="1.3" height="1.3" fill="#a9a592"/><rect x="1" y="3.90" width="1" height="1" fill="#fbfaf6" opacity=".8"/><rect x=".2" y="6.00" width="1.3" height="1.3" fill="#a9a592"/><rect x="1" y="6.80" width="1" height="1" fill="#fbfaf6" opacity=".8"/><rect x=".2" y="8.90" width="1.3" height="1.3" fill="#a9a592"/><rect x="1" y="9.70" width="1" height="1" fill="#fbfaf6" opacity=".8"/><rect x=".2" y="11.80" width="1.3" height="1.3" fill="#a9a592"/><rect x="1" y="12.60" width="1" height="1" fill="#fbfaf6" opacity=".8"/></svg>
<div style="left:844px;top:361px;width:74.5px;height:15.5px;background:#ece9d8;border:1px solid #a9b9d0;"></div>
<span style="left:846.75px;top:363px;font-size:9.6px;line-height:12px;color:#b4b1a2;white-space:pre;transform:scaleX(0.8738);transform-origin:0 50%;">Custom</span>
<div style="left:906.5px;top:363px;width:10.5px;height:12px;background:#f3f2ea;border:1px solid #dedbcc;border-radius:1.5px;"></div>
<svg style="left:906.5px;top:363px;" width="10.5" height="12" viewBox="0 0 10.5 12"><path d="M2.6 4.6 L5.2 7.2 L7.8 4.6" fill="none" stroke="#c3c0b2" stroke-width="1.2"/></svg>
<svg style="left:921.5px;top:361.5px;" width="15" height="15" viewBox="0 0 15 15"><path d="M5.4 1.4 H10.6 L12.8 3.6 V9.6 H5.4 Z" fill="#f6f8fc" stroke="#b4bed8" stroke-width=".6"/><path d="M10.6 1.4 V3.6 H12.8" fill="#dfe6f4" stroke="#b4bed8" stroke-width=".5"/><path d="M1.2 7.6 V12.6 H5.8 V10.8 H3 V7.6 Z" fill="#7f84d6"/><path d="M4.6 11.2 L9 6.6 L7.4 5.2 L12.6 4.2 L11.8 9.4 L10.4 8 L6 12.6 Z" fill="#3fa646" stroke="#2f8a36" stroke-width=".3"/></svg>
<svg style="left:937.5px;top:367.2px;" width="4.6" height="3" viewBox="0 0 4.6 3"><path d="M0 0 H3.6 L1.8 2 Z" fill="#000"/></svg>
<svg style="left:947.5px;top:362.5px;" width="15" height="13" viewBox="0 0 15 13"><path d="M1.5 8.5 L8 2 L13 4.5 L6.5 11 H3.5 Z" fill="#f6f5f0" stroke="#a9a79c" stroke-width=".9"/><path d="M3 11.6 H11" stroke="#a9a79c" stroke-width=".9"/></svg>
<svg style="left:968.5px;top:363px;" width="12" height="12" viewBox="0 0 12 12"><path d="M2 2.2 L9.6 9.8 M9.6 2.2 L2 9.8" stroke="#b2b2ac" stroke-width="2.3" stroke-linecap="round"/></svg>
<svg style="left:986px;top:372.4px;" width="5" height="3.2" viewBox="0 0 5 3.2"><path d="M0 0 H4 L2.0 2.2 Z" fill="#000"/></svg>
<div style="left:836px;top:378px;width:187px;height:375px;background:#ece9d8;border:1px solid #cfdcea;"></div>
<div style="left:837px;top:379px;width:185px;height:373px;border:1px solid #94a4b5;"></div>
<span style="left:850.35px;top:382px;font-size:9.6px;line-height:12px;color:#000;white-space:pre;transform:scaleX(0.8814);transform-origin:0 50%;">Completion</span>
<div style="left:838px;top:395.5px;width:183px;height:0px;border-top:1px dotted #c6c3b3;"></div>
<div style="left:1007.2px;top:382.4px;width:11.5px;height:11.2px;background:linear-gradient(#cbd9fb,#b3c7f3);border-radius:1.5px;"></div>
<svg style="left:1007.2px;top:382.4px;" width="11.5" height="11.2" viewBox="0 0 11.5 11.2"><path d="M3.05 4.5 L5.75 7.199999999999999 L8.45 4.5" fill="none" stroke="#3f5584" stroke-width="1.4"/></svg>
<span style="left:850.35px;top:398px;font-size:9.6px;line-height:12px;color:#000;white-space:pre;transform:scaleX(0.8950);transform-origin:0 50%;">Due Date</span>
<div style="left:838px;top:411.4px;width:183px;height:0px;border-top:1px dotted #c6c3b3;"></div>
<div style="left:1007.2px;top:398.4px;width:11.5px;height:11.2px;background:linear-gradient(#cbd9fb,#b3c7f3);border-radius:1.5px;"></div>
<svg style="left:1007.2px;top:398.4px;" width="11.5" height="11.2" viewBox="0 0 11.5 11.2"><path d="M3.05 4.5 L5.75 7.199999999999999 L8.45 4.5" fill="none" stroke="#3f5584" stroke-width="1.4"/></svg>
<span style="left:850.35px;top:414px;font-size:9.6px;line-height:12px;color:#000;white-space:pre;transform:scaleX(0.9296);transform-origin:0 50%;">Status</span>
<div style="left:838px;top:427.1px;width:183px;height:0px;border-top:1px dotted #c6c3b3;"></div>
<div style="left:1007.2px;top:414.3px;width:11.5px;height:11.2px;background:linear-gradient(#cbd9fb,#b3c7f3);border-radius:1.5px;"></div>
<svg style="left:1007.2px;top:414.3px;" width="11.5" height="11.2" viewBox="0 0 11.5 11.2"><path d="M3.05 4.5 L5.75 7.199999999999999 L8.45 4.5" fill="none" stroke="#3f5584" stroke-width="1.4"/></svg>
<span style="left:850.35px;top:430px;font-size:9.6px;line-height:12px;color:#000;white-space:pre;transform:scaleX(0.9307);transform-origin:0 50%;">Priority</span>
<div style="left:838px;top:443px;width:183px;height:0px;border-top:1px dotted #c6c3b3;"></div>
<div style="left:1007.2px;top:430px;width:11.5px;height:11.2px;background:linear-gradient(#cbd9fb,#b3c7f3);border-radius:1.5px;"></div>
<svg style="left:1007.2px;top:430px;" width="11.5" height="11.2" viewBox="0 0 11.5 11.2"><path d="M3.05 4.5 L5.75 7.199999999999999 L8.45 4.5" fill="none" stroke="#3f5584" stroke-width="1.4"/></svg>
<span style="left:850.35px;top:445px;font-size:9.6px;line-height:12px;color:#000;white-space:pre;transform:scaleX(0.8706);transform-origin:0 50%;">Task Name</span>
<div style="left:838px;top:458.8px;width:183px;height:0px;border-top:1px dotted #c6c3b3;"></div>
<span style="left:850.35px;top:461px;font-size:9.6px;line-height:12px;color:#000;white-space:pre;transform:scaleX(0.9159);transform-origin:0 50%;">Date Created</span>
<div style="left:838px;top:474.5px;width:183px;height:0px;border-top:1px dotted #c6c3b3;"></div>
<div style="left:1007.2px;top:461.7px;width:11.5px;height:11.2px;background:linear-gradient(#cbd9fb,#b3c7f3);border-radius:1.5px;"></div>
<svg style="left:1007.2px;top:461.7px;" width="11.5" height="11.2" viewBox="0 0 11.5 11.2"><path d="M3.05 4.5 L5.75 7.199999999999999 L8.45 4.5" fill="none" stroke="#3f5584" stroke-width="1.4"/></svg>
<div style="left:850px;top:477px;width:65.2px;height:12px;overflow:hidden;"><span style="left:.4px;top:0;font-size:9.6px;line-height:12px;white-space:pre;color:#000;transform:scaleX(0.9049);transform-origin:0 50%;">Date Last Modifier</span></div>
<div style="left:838px;top:490.2px;width:183px;height:0px;border-top:1px dotted #c6c3b3;"></div>
<div style="left:1007.2px;top:477.4px;width:11.5px;height:11.2px;background:linear-gradient(#cbd9fb,#b3c7f3);border-radius:1.5px;"></div>
<svg style="left:1007.2px;top:477.4px;" width="11.5" height="11.2" viewBox="0 0 11.5 11.2"><path d="M3.05 4.5 L5.75 7.199999999999999 L8.45 4.5" fill="none" stroke="#3f5584" stroke-width="1.4"/></svg>
<span style="left:850.35px;top:493px;font-size:9.6px;line-height:12px;color:#000;white-space:pre;transform:scaleX(0.9070);transform-origin:0 50%;">Date Opened</span>
<div style="left:838px;top:505.9px;width:183px;height:0px;border-top:1px dotted #c6c3b3;"></div>
<div style="left:1007.2px;top:493.1px;width:11.5px;height:11.2px;background:linear-gradient(#cbd9fb,#b3c7f3);border-radius:1.5px;"></div>
<svg style="left:1007.2px;top:493.1px;" width="11.5" height="11.2" viewBox="0 0 11.5 11.2"><path d="M3.05 4.5 L5.75 7.199999999999999 L8.45 4.5" fill="none" stroke="#3f5584" stroke-width="1.4"/></svg>
<span style="left:850.35px;top:508px;font-size:9.6px;line-height:12px;color:#000;white-space:pre;transform:scaleX(0.8981);transform-origin:0 50%;">Date Completed</span>
<div style="left:1007.2px;top:508.8px;width:11.5px;height:11.2px;background:linear-gradient(#cbd9fb,#b3c7f3);border-radius:1.5px;"></div>
<svg style="left:1007.2px;top:508.8px;" width="11.5" height="11.2" viewBox="0 0 11.5 11.2"><path d="M3.05 4.5 L5.75 7.199999999999999 L8.45 4.5" fill="none" stroke="#3f5584" stroke-width="1.4"/></svg>
<div style="left:838px;top:522px;width:183px;height:1px;background:#b3b0a0;"></div>
<div style="left:916px;top:380px;width:1px;height:142px;background:#b9b5a3;"></div>
<div style="left:284.9px;top:209.3px;width:360.6px;height:314.6px;background:#ece9d8;border-radius:6px 6px 0 0;border:2.2px solid #1c46b4;border-top:0;border-right:2.6px solid #0c2a92;border-bottom-color:#10298e;overflow:hidden;"></div>
<div style="left:284.9px;top:209.3px;width:360.6px;height:21.8px;border-radius:6px 6px 0 0;background:linear-gradient(#1a5ad8 0,#2a74ee 1.5px,#0a5fe8 4px,#0355e4 9px,#0150dc 16px,#0a49c6 21.8px);"></div>
<span style="left:290.65px;top:215px;font-size:10px;line-height:13px;color:#fff;white-space:pre;font-weight:bold;transform:scaleX(1.0271);transform-origin:0 50%;">Edit Task</span>
<div style="left:625px;top:213.4px;width:16.5px;height:15px;border:1px solid #fff;border-radius:3px;background:linear-gradient(135deg,#ee9a7c,#d9552f 45%,#c03c14);"></div>
<svg style="left:625px;top:213.4px;" width="16.5" height="15" viewBox="0 0 16.5 15"><path d="M4.8 4 L11.7 11 M11.7 4 L4.8 11" stroke="#fff" stroke-width="1.6"/></svg>
<div style="left:293.5px;top:252.2px;width:341.2px;height:233px;background:linear-gradient(#fdfdfb,#f5f4ef);border:1px solid #919b9c;"></div>
<div style="left:634.7px;top:253.5px;width:1px;height:232.5px;background:#d6d3c4;"></div>
<div style="left:295px;top:485.2px;width:340px;height:1px;background:#d6d3c4;"></div>
<div style="left:336px;top:238px;width:43px;height:14.4px;background:linear-gradient(#fefefe,#f3f3ec 80%,#e6e6dc);border:1px solid #919b9c;border-bottom:0;border-radius:2.5px 2.5px 0 0;"></div>
<span style="left:339.35px;top:240px;font-size:9.6px;line-height:12px;color:#000;white-space:pre;transform:scaleX(0.8722);transform-origin:0 50%;">Reminder</span>
<div style="left:381px;top:238px;width:43px;height:14.4px;background:linear-gradient(#fefefe,#f3f3ec 80%,#e6e6dc);border:1px solid #919b9c;border-bottom:0;border-radius:2.5px 2.5px 0 0;"></div>
<span style="left:384.45px;top:240px;font-size:9.6px;line-height:12px;color:#000;white-space:pre;transform:scaleX(0.9122);transform-origin:0 50%;">Hyperlink</span>
<div style="left:426px;top:238px;width:31.5px;height:14.4px;background:linear-gradient(#fefefe,#f3f3ec 80%,#e6e6dc);border:1px solid #919b9c;border-bottom:0;border-radius:2.5px 2.5px 0 0;"></div>
<span style="left:432.05px;top:240px;font-size:9.6px;line-height:12px;color:#000;white-space:pre;transform:scaleX(0.9320);transform-origin:0 50%;">Note</span>
<div style="left:459px;top:238px;width:31px;height:14.4px;background:linear-gradient(#fefefe,#f3f3ec 80%,#e6e6dc);border:1px solid #919b9c;border-bottom:0;border-radius:2.5px 2.5px 0 0;"></div>
<span style="left:467.65px;top:240px;font-size:9.6px;line-height:12px;color:#000;white-space:pre;transform:scaleX(0.9680);transform-origin:0 50%;">Info</span>
<div style="left:294px;top:237px;width:42px;height:16.3px;background:#fcfcfa;border:1px solid #b9bfc2;border-bottom:0;border-top:0;border-radius:3px 3px 0 0;"></div>
<div style="left:294px;top:237px;width:42px;height:2px;background:linear-gradient(#eeae52,#fbdc96);border-radius:3px 3px 0 0;"></div>
<span style="left:299.75px;top:239px;font-size:9.6px;line-height:12px;color:#000;white-space:pre;transform:scaleX(0.9047);transform-origin:0 50%;">General</span>
<span style="left:307.55px;top:260px;font-size:9.6px;line-height:12px;color:#000;white-space:pre;transform:scaleX(0.9596);transform-origin:0 50%;">Task:</span>
<div style="left:337.2px;top:258px;width:266.8px;height:15.8px;background:#fff;border:1px solid #8ba5c2;"></div>
<span style="left:339.75px;top:260px;font-size:9.6px;line-height:12px;color:#000;white-space:pre;transform:scaleX(0.8852);transform-origin:0 50%;">Keep records of payments from the clients attracted last week</span>
<span style="left:307.55px;top:284px;font-size:9.6px;line-height:12px;color:#000;white-space:pre;transform:scaleX(0.8452);transform-origin:0 50%;">Priority:</span>
<div style="left:337.2px;top:282.4px;width:87.6px;height:15px;background:#fff;border:1px solid #8ba5c2;"></div>
<svg style="left:339.8px;top:283.4px;" width="13.5" height="13" viewBox="0 0 13.5 13"><defs><radialGradient id="ogd" cx=".4" cy=".35" r=".7"><stop offset="0" stop-color="#f6a850"/><stop offset=".55" stop-color="#e07010"/><stop offset="1" stop-color="#b04c04"/></radialGradient></defs><circle cx="6.7" cy="6.5" r="6.1" fill="url(#ogd)"/><circle cx="6.7" cy="6.5" r="2.5" fill="#fdf0e0"/></svg>
<span style="left:356.75px;top:284px;font-size:9.6px;line-height:12px;color:#000;white-space:pre;transform:scaleX(0.8695);transform-origin:0 50%;">Normal</span>
<div style="left:411.3px;top:283.8px;width:12.1px;height:12.2px;background:linear-gradient(#cbdafc,#b0c5f2);border-radius:1.5px;border:0.5px solid #c6d5fa;"></div>
<svg style="left:411.3px;top:283.8px;" width="12.1" height="12.2" viewBox="0 0 12.1 12.2"><path d="M3.249999999999983 4.899999999999994 L6.049999999999983 7.699999999999994 L8.849999999999984 4.899999999999994" fill="none" stroke="#445a88" stroke-width="1.5"/></svg>
<span style="left:435.35px;top:284px;font-size:9.6px;line-height:12px;color:#000;white-space:pre;transform:scaleX(0.8433);transform-origin:0 50%;">Category:</span>
<div style="left:478.2px;top:282.4px;width:125.8px;height:15px;background:#fff;border:1px solid #8ba5c2;"></div>
<span style="left:480.35px;top:284px;font-size:9.6px;line-height:12px;color:#000;white-space:pre;transform:scaleX(0.9059);transform-origin:0 50%;">My Current Tasks</span>
<div style="left:590.3px;top:283.8px;width:12.2px;height:12.2px;background:linear-gradient(#cbdafc,#b0c5f2);border-radius:1.5px;border:0.5px solid #c6d5fa;"></div>
<svg style="left:590.3px;top:283.8px;" width="12.2" height="12.2" viewBox="0 0 12.2 12.2"><path d="M3.300000000000023 4.899999999999994 L6.100000000000023 7.699999999999994 L8.900000000000023 4.899999999999994" fill="none" stroke="#445a88" stroke-width="1.5"/></svg>
<span style="left:307.55px;top:302px;font-size:9.6px;line-height:12px;color:#000;white-space:pre;transform:scaleX(0.8760);transform-origin:0 50%;">Note:</span>
<div style="left:308px;top:315.6px;width:295.2px;height:47.8px;background:#fff;border:1px solid #8ba5c2;"></div>
<span style="left:307.55px;top:377px;font-size:9.6px;line-height:12px;color:#000;white-space:pre;transform:scaleX(0.8734);transform-origin:0 50%;">Status:</span>
<div style="left:336.8px;top:375.2px;width:97px;height:15.6px;background:#fff;border:1px solid #8ba5c2;"></div>
<svg style="left:341.5px;top:376.6px;" width="11" height="13" viewBox="0 0 11 13"><defs><linearGradient id="dgX" x1="0" y1="0" x2="1" y2="1"><stop offset="0" stop-color="#ffffff"/><stop offset=".45" stop-color="#e4f0fc"/><stop offset="1" stop-color="#9cc6f0"/></linearGradient></defs><path d="M.6 .6 H7 L10.2 3.8 V12.3 H.6 Z" fill="url(#dgX)" stroke="#86a8d8" stroke-width=".9"/><path d="M7 .6 L10.2 3.8 H7 Z" fill="#6f9ad6"/></svg>
<span style="left:355.75px;top:377px;font-size:9.6px;line-height:12px;color:#000;white-space:pre;transform:scaleX(0.9047);transform-origin:0 50%;">Created</span>
<div style="left:420.3px;top:376.6px;width:12px;height:12.8px;background:linear-gradient(#cbdafc,#b0c5f2);border-radius:1.5px;border:0.5px solid #c6d5fa;"></div>
<svg style="left:420.3px;top:376.6px;" width="12" height="12.8" viewBox="0 0 12 12.8"><path d="M3.2 5.199999999999977 L6.0 7.999999999999977 L8.8 5.199999999999977" fill="none" stroke="#445a88" stroke-width="1.5"/></svg>
<span style="left:449.45px;top:377px;font-size:9.6px;line-height:12px;color:#000;white-space:pre;transform:scaleX(0.8384);transform-origin:0 50%;">Complete(%):</span>
<div style="left:503px;top:375.2px;width:70.8px;height:15.6px;background:#fff;border:1px solid #8ba5c2;"></div>
<span style="left:506px;top:377px;font-size:9.6px;line-height:12px;color:#000;white-space:pre;">0</span>
<div style="left:538.4px;top:376.6px;width:10.9px;height:12.8px;background:linear-gradient(#cbdafc,#b0c5f2);border-radius:1.5px;"></div>
<svg style="left:538.4px;top:376.6px;" width="10.9" height="12.8" viewBox="0 0 10.9 12.8"><path d="M6.8 4 L4 6.4 L6.8 8.8 Z" fill="#445a88"/></svg>
<div style="left:562px;top:376.6px;width:10.6px;height:12.8px;background:linear-gradient(#cbdafc,#b0c5f2);border-radius:1.5px;"></div>
<svg style="left:562px;top:376.6px;" width="10.6" height="12.8" viewBox="0 0 10.6 12.8"><path d="M4 4 L6.8 6.4 L4 8.8 Z" fill="#445a88"/></svg>
<div style="left:550px;top:376.6px;width:11.3px;height:6.2px;background:linear-gradient(#cbdafc,#b8cbf5);border-radius:1.5px;"></div>
<div style="left:550px;top:383.2px;width:11.3px;height:6.2px;background:linear-gradient(#c0d1f8,#b0c5f2);border-radius:1.5px;"></div>
<svg style="left:550px;top:376.6px;" width="11.3" height="12.8" viewBox="0 0 11.3 12.8"><path d="M3.4 4.6 L5.65 2.4 L7.9 4.6 M3.4 8.2 L5.65 10.4 L7.9 8.2" fill="none" stroke="#445a88" stroke-width="1.2"/></svg>
<div style="left:577.2px;top:375.2px;width:18.3px;height:16.8px;background:linear-gradient(#fff,#eceadd);border:1.2px solid #3a5680;border-radius:3px;"></div>
<svg style="left:579.6px;top:377.3px;" width="13.5" height="13" viewBox="0 0 13.5 13"><circle cx="6.7" cy="6.4" r="5.9" fill="#e8851c" stroke="#c86a10" stroke-width=".6"/><circle cx="6.7" cy="6.4" r="3.7" fill="none" stroke="#fbe2c2" stroke-width=".9"/><path d="M4.6 6.3 L6.2 8 L8.9 4.6" fill="none" stroke="#fff" stroke-width="1.2"/></svg>
<span style="left:307.55px;top:402px;font-size:9.6px;line-height:12px;color:#000;white-space:pre;transform:scaleX(0.8404);transform-origin:0 50%;">Estimated time:</span>
<div style="left:365.3px;top:400.5px;width:68.5px;height:15.1px;background:#fff;border:1px solid #8ba5c2;"></div>
<span style="left:367.75px;top:402px;font-size:9.6px;line-height:12px;color:#000;white-space:pre;transform:scaleX(0.8866);transform-origin:0 50%;">0 minutes</span>
<div style="left:420.3px;top:401.9px;width:12px;height:12.3px;background:linear-gradient(#cbdafc,#b0c5f2);border-radius:1.5px;border:0.5px solid #c6d5fa;"></div>
<svg style="left:420.3px;top:401.9px;" width="12" height="12.3" viewBox="0 0 12 12.3"><path d="M3.2 4.9500000000000055 L6.0 7.750000000000005 L8.8 4.9500000000000055" fill="none" stroke="#445a88" stroke-width="1.5"/></svg>
<span style="left:453.75px;top:402px;font-size:9.6px;line-height:12px;color:#000;white-space:pre;transform:scaleX(0.8953);transform-origin:0 50%;">Actual time:</span>
<div style="left:502.2px;top:400.5px;width:67.8px;height:15.1px;background:#fff;border:1px solid #8ba5c2;"></div>
<span style="left:504.75px;top:402px;font-size:9.6px;line-height:12px;color:#000;white-space:pre;transform:scaleX(0.8866);transform-origin:0 50%;">0 minutes</span>
<div style="left:557px;top:401.9px;width:11.8px;height:12.3px;background:linear-gradient(#cbdafc,#b0c5f2);border-radius:1.5px;border:0.5px solid #c6d5fa;"></div>
<svg style="left:557px;top:401.9px;" width="11.8" height="12.3" viewBox="0 0 11.8 12.3"><path d="M3.0999999999999774 4.9500000000000055 L5.899999999999977 7.750000000000005 L8.699999999999978 4.9500000000000055" fill="none" stroke="#445a88" stroke-width="1.5"/></svg>
<div style="left:360.6px;top:430.3px;width:243px;height:1px;background:#d5d2c2;border-radius:1px;"></div>
<div style="left:603px;top:430.3px;width:1px;height:3px;background:#e2dfd2;"></div>
<div style="left:308.5px;top:423.6px;width:10.6px;height:10.6px;background:linear-gradient(135deg,#dcdcd6,#f4f4f0 60%,#fff);border:1px solid #476b93;"></div>
<svg style="left:308.5px;top:423.6px;" width="10.6" height="10.6" viewBox="0 0 10.6 10.6"><path d="M2.6 5 L4.6 7.4 L8.2 2.8" fill="none" stroke="#2fa42a" stroke-width="1.6"/></svg>
<span style="left:321.35px;top:422px;font-size:9.6px;line-height:12px;color:#000;white-space:pre;transform:scaleX(0.9316);transform-origin:0 50%;">Due date</span>
<svg style="left:324.3px;top:443.5px;" width="11" height="11" viewBox="0 0 11 11"><circle cx="5.5" cy="5.5" r="4.8" fill="#f8f8f5" stroke="#476b93" stroke-width="1"/><circle cx="5.5" cy="5.5" r="2.1" fill="#38b22e"/></svg>
<span style="left:337.55px;top:443px;font-size:9.6px;line-height:12px;color:#000;white-space:pre;transform:scaleX(0.9370);transform-origin:0 50%;">Once</span>
<svg style="left:324.3px;top:464px;" width="11" height="11" viewBox="0 0 11 11"><circle cx="5.5" cy="5.5" r="4.8" fill="#f8f8f5" stroke="#476b93" stroke-width="1"/></svg>
<span style="left:337.55px;top:464px;font-size:9.6px;line-height:12px;color:#000;white-space:pre;transform:scaleX(0.9209);transform-origin:0 50%;">Recurrence</span>
<div style="left:394px;top:441.2px;width:96.8px;height:15.4px;background:#fff;border:1px solid #8ba5c2;"></div>
<span style="left:396.95px;top:443px;font-size:9.6px;line-height:12px;color:#000;white-space:pre;transform:scaleX(0.9719);transform-origin:0 50%;">30/08/2015</span>
<div style="left:477.8px;top:442.6px;width:11.4px;height:12.6px;background:linear-gradient(#cbdafc,#b0c5f2);border-radius:1.5px;border:0.5px solid #c6d5fa;"></div>
<svg style="left:477.8px;top:442.6px;" width="11.4" height="12.6" viewBox="0 0 11.4 12.6"><path d="M2.899999999999989 5.099999999999983 L5.699999999999989 7.899999999999983 L8.49999999999999 5.099999999999983" fill="none" stroke="#445a88" stroke-width="1.5"/></svg>
<div style="left:497px;top:441.2px;width:80.8px;height:15.4px;background:#fff;border:1px solid #8ba5c2;"></div>
<span style="left:500.05px;top:443px;font-size:9.6px;line-height:12px;color:#000;white-space:pre;transform:scaleX(0.9179);transform-origin:0 50%;">20:45:45</span>
<div style="left:564.4px;top:442.6px;width:12.2px;height:6.2px;background:linear-gradient(#cbdafc,#b8cbf5);border-radius:1.5px;"></div>
<div style="left:564.4px;top:449px;width:12.2px;height:6.2px;background:linear-gradient(#c0d1f8,#b0c5f2);border-radius:1.5px;"></div>
<svg style="left:564.4px;top:442.6px;" width="12.2" height="12.6" viewBox="0 0 12.2 12.6"><path d="M3.8 4.4 L6.1 2.2 L8.4 4.4 M3.8 8.2 L6.1 10.4 L8.4 8.2" fill="none" stroke="#445a88" stroke-width="1.3"/></svg>
<div style="left:500px;top:462.4px;width:77.8px;height:16.9px;background:#ecebe4;border:1px solid #b5c6da;"></div>
<div style="left:547.2px;top:464px;width:11.3px;height:13.8px;background:#f3f2eb;border:1px solid #d9d6c8;border-radius:2px;"></div>
<span style="left:549.6px;top:466px;font-size:8px;line-height:10px;color:#b9b6a8;white-space:pre;">...</span>
<div style="left:561.3px;top:464px;width:15.3px;height:13.8px;background:#f3f2eb;border:1px solid #d9d6c8;border-radius:2px;"></div>
<svg style="left:561.3px;top:464px;" width="15.3" height="13.8" viewBox="0 0 15.3 13.8"><path d="M7.6 1.6 L13 6.9 L7.6 12.2 L2.2 6.9 Z" fill="#b5b1a2"/></svg>
<span style="left:292.65px;top:496px;font-size:9.6px;line-height:12px;color:#000;white-space:pre;transform:scaleX(0.8819);transform-origin:0 50%;">Hint: Use shortcut Ctrl+Tab</span>
<span style="left:292.65px;top:506px;font-size:9.6px;line-height:12px;color:#000;white-space:pre;transform:scaleX(0.8602);transform-origin:0 50%;">pages</span>
<div style="left:500px;top:498.8px;width:59.4px;height:15.8px;background:#f5f4ee;border:1px solid #d8d5c8;border-radius:2.5px;"></div>
<svg style="left:517px;top:501px;" width="13" height="11" viewBox="0 0 13 11"><path d="M1.5 5.5 L5 9 L11.5 2.4" fill="none" stroke="#a9a79b" stroke-width="2"/></svg>
<span style="left:532.75px;top:501px;font-size:9.6px;line-height:12px;color:#b3b0a2;white-space:pre;transform:scaleX(0.9293);transform-origin:0 50%;">Ok</span>
<div style="left:575px;top:498.2px;width:58.6px;height:16.8px;background:linear-gradient(#fff,#f4f3ec 70%,#dfdccd);border:1.2px solid #2b4f86;border-radius:3px;"></div>
<svg style="left:583.5px;top:500.6px;" width="12" height="12" viewBox="0 0 12 12"><path d="M2 2.2 L10 10 M10 2.2 L2 10" stroke="#e23a22" stroke-width="2.6" stroke-linecap="round"/></svg>
<span style="left:599.45px;top:501px;font-size:9.6px;line-height:12px;color:#000;white-space:pre;transform:scaleX(0.9102);transform-origin:0 50%;">Cancel</span>
<div style="left:394.3px;top:456.7px;width:121.5px;height:117.9px;background:#fff;border:1px solid #4a4a4a;"></div>
<div style="left:395.3px;top:457.7px;width:119.5px;height:13px;background:#ece9d8;"></div>
<svg style="left:399.4px;top:460.1px;" width="4.5" height="7.5" viewBox="0 0 4.5 7.5"><path d="M4 0 L0 3.5 L4 7 Z" fill="#000"/></svg>
<svg style="left:457.8px;top:460.1px;" width="4.5" height="7.5" viewBox="0 0 4.5 7.5"><path d="M0 0 L4 3.5 L0 7 Z" fill="#000"/></svg>
<svg style="left:471px;top:460.1px;" width="4.5" height="7.5" viewBox="0 0 4.5 7.5"><path d="M4 0 L0 3.5 L4 7 Z" fill="#000"/></svg>
<svg style="left:506px;top:460.1px;" width="4.5" height="7.5" viewBox="0 0 4.5 7.5"><path d="M0 0 L4 3.5 L0 7 Z" fill="#000"/></svg>
<span style="left:417.15px;top:458px;font-size:9.6px;line-height:12px;color:#000;white-space:pre;transform:scaleX(0.9201);transform-origin:0 50%;">August</span>
<span style="left:481.35px;top:458px;font-size:9.6px;line-height:12px;color:#000;white-space:pre;transform:scaleX(0.9458);transform-origin:0 50%;">2015</span>
<span style="left:409.401px;top:471px;font-size:9.6px;line-height:12px;color:#000;white-space:pre;transform:scaleX(.86);transform-origin:50% 50%;">M</span>
<span style="left:425.068px;top:471px;font-size:9.6px;line-height:12px;color:#000;white-space:pre;transform:scaleX(.86);transform-origin:50% 50%;">T</span>
<span style="left:438.07px;top:471px;font-size:9.6px;line-height:12px;color:#000;white-space:pre;transform:scaleX(.86);transform-origin:50% 50%;">W</span>
<span style="left:454.068px;top:471px;font-size:9.6px;line-height:12px;color:#000;white-space:pre;transform:scaleX(.86);transform-origin:50% 50%;">T</span>
<span style="left:468.068px;top:471px;font-size:9.6px;line-height:12px;color:#000;white-space:pre;transform:scaleX(.86);transform-origin:50% 50%;">F</span>
<span style="left:482.198px;top:471px;font-size:9.6px;line-height:12px;color:#000;white-space:pre;transform:scaleX(.86);transform-origin:50% 50%;">S</span>
<span style="left:496.798px;top:471px;font-size:9.6px;line-height:12px;color:#000;white-space:pre;transform:scaleX(.86);transform-origin:50% 50%;">S</span>
<div style="left:404.8px;top:482.3px;width:101px;height:1px;background:#a9a9a9;"></div>
<span style="left:406.22px;top:484px;font-size:9.6px;line-height:12px;color:#b4b4b4;white-space:pre;transform:scaleX(0.89);transform-origin:100% 50%;">27</span>
<span style="left:420.82px;top:484px;font-size:9.6px;line-height:12px;color:#b4b4b4;white-space:pre;transform:scaleX(0.89);transform-origin:100% 50%;">28</span>
<span style="left:435.42px;top:484px;font-size:9.6px;line-height:12px;color:#b4b4b4;white-space:pre;transform:scaleX(0.89);transform-origin:100% 50%;">29</span>
<span style="left:449.82px;top:484px;font-size:9.6px;line-height:12px;color:#b4b4b4;white-space:pre;transform:scaleX(0.89);transform-origin:100% 50%;">30</span>
<span style="left:463.82px;top:484px;font-size:9.6px;line-height:12px;color:#b4b4b4;white-space:pre;transform:scaleX(0.89);transform-origin:100% 50%;">31</span>
<span style="left:483.56px;top:484px;font-size:9.6px;line-height:12px;color:#000;white-space:pre;transform:scaleX(0.89);transform-origin:100% 50%;">1</span>
<span style="left:498.16px;top:484px;font-size:9.6px;line-height:12px;color:#000;white-space:pre;transform:scaleX(0.89);transform-origin:100% 50%;">2</span>
<span style="left:411.56px;top:495px;font-size:9.6px;line-height:12px;color:#000;white-space:pre;transform:scaleX(0.89);transform-origin:100% 50%;">3</span>
<span style="left:426.16px;top:495px;font-size:9.6px;line-height:12px;color:#000;white-space:pre;transform:scaleX(0.89);transform-origin:100% 50%;">4</span>
<span style="left:440.76px;top:495px;font-size:9.6px;line-height:12px;color:#000;white-space:pre;transform:scaleX(0.89);transform-origin:100% 50%;">5</span>
<span style="left:455.16px;top:495px;font-size:9.6px;line-height:12px;color:#000;white-space:pre;transform:scaleX(0.89);transform-origin:100% 50%;">6</span>
<span style="left:469.16px;top:495px;font-size:9.6px;line-height:12px;color:#000;white-space:pre;transform:scaleX(0.89);transform-origin:100% 50%;">7</span>
<span style="left:483.56px;top:495px;font-size:9.6px;line-height:12px;color:#000;white-space:pre;transform:scaleX(0.89);transform-origin:100% 50%;">8</span>
<span style="left:498.16px;top:495px;font-size:9.6px;line-height:12px;color:#000;white-space:pre;transform:scaleX(0.89);transform-origin:100% 50%;">9</span>
<span style="left:406.22px;top:506px;font-size:9.6px;line-height:12px;color:#000;white-space:pre;transform:scaleX(0.89);transform-origin:100% 50%;">10</span>
<span style="left:421.53px;top:506px;font-size:9.6px;line-height:12px;color:#000;white-space:pre;transform:scaleX(0.89);transform-origin:100% 50%;">11</span>
<span style="left:435.42px;top:506px;font-size:9.6px;line-height:12px;color:#000;white-space:pre;transform:scaleX(0.89);transform-origin:100% 50%;">12</span>
<span style="left:449.82px;top:506px;font-size:9.6px;line-height:12px;color:#000;white-space:pre;transform:scaleX(0.89);transform-origin:100% 50%;">13</span>
<span style="left:463.82px;top:506px;font-size:9.6px;line-height:12px;color:#000;white-space:pre;transform:scaleX(0.89);transform-origin:100% 50%;">14</span>
<span style="left:478.22px;top:506px;font-size:9.6px;line-height:12px;color:#000;white-space:pre;transform:scaleX(0.89);transform-origin:100% 50%;">15</span>
<span style="left:492.82px;top:506px;font-size:9.6px;line-height:12px;color:#000;white-space:pre;transform:scaleX(0.89);transform-origin:100% 50%;">16</span>
<span style="left:406.22px;top:517px;font-size:9.6px;line-height:12px;color:#000;white-space:pre;transform:scaleX(0.89);transform-origin:100% 50%;">17</span>
<span style="left:420.82px;top:517px;font-size:9.6px;line-height:12px;color:#000;white-space:pre;transform:scaleX(0.89);transform-origin:100% 50%;">18</span>
<span style="left:435.42px;top:517px;font-size:9.6px;line-height:12px;color:#000;white-space:pre;transform:scaleX(0.89);transform-origin:100% 50%;">19</span>
<span style="left:449.82px;top:517px;font-size:9.6px;line-height:12px;color:#000;white-space:pre;transform:scaleX(0.89);transform-origin:100% 50%;">20</span>
<span style="left:463.82px;top:517px;font-size:9.6px;line-height:12px;color:#000;white-space:pre;transform:scaleX(0.89);transform-origin:100% 50%;">21</span>
<span style="left:478.22px;top:517px;font-size:9.6px;line-height:12px;color:#000;white-space:pre;transform:scaleX(0.89);transform-origin:100% 50%;">22</span>
<span style="left:492.82px;top:517px;font-size:9.6px;line-height:12px;color:#000;white-space:pre;transform:scaleX(0.89);transform-origin:100% 50%;">23</span>
<span style="left:406.22px;top:528px;font-size:9.6px;line-height:12px;color:#000;white-space:pre;transform:scaleX(0.89);transform-origin:100% 50%;">24</span>
<span style="left:420.82px;top:528px;font-size:9.6px;line-height:12px;color:#000;white-space:pre;transform:scaleX(0.89);transform-origin:100% 50%;">25</span>
<span style="left:435.42px;top:528px;font-size:9.6px;line-height:12px;color:#000;white-space:pre;transform:scaleX(0.89);transform-origin:100% 50%;">26</span>
<span style="left:449.82px;top:528px;font-size:9.6px;line-height:12px;color:#000;white-space:pre;transform:scaleX(0.89);transform-origin:100% 50%;">27</span>
<span style="left:463.82px;top:528px;font-size:9.6px;line-height:12px;color:#000;white-space:pre;transform:scaleX(0.89);transform-origin:100% 50%;">28</span>
<span style="left:478.22px;top:528px;font-size:9.6px;line-height:12px;color:#000;white-space:pre;transform:scaleX(0.89);transform-origin:100% 50%;">29</span>
<div style="left:491.3px;top:529px;width:14.3px;height:10.9px;background:#316ac5;"></div>
<span style="left:492.82px;top:528px;font-size:9.6px;line-height:12px;color:#fff;white-space:pre;transform:scaleX(0.89);transform-origin:100% 50%;">30</span>
<span style="left:406.22px;top:540px;font-size:9.6px;line-height:12px;color:#000;white-space:pre;transform:scaleX(0.89);transform-origin:100% 50%;">31</span>
<span style="left:426.16px;top:540px;font-size:9.6px;line-height:12px;color:#b4b4b4;white-space:pre;transform:scaleX(0.89);transform-origin:100% 50%;">1</span>
<span style="left:440.76px;top:540px;font-size:9.6px;line-height:12px;color:#b4b4b4;white-space:pre;transform:scaleX(0.89);transform-origin:100% 50%;">2</span>
<span style="left:455.16px;top:540px;font-size:9.6px;line-height:12px;color:#b4b4b4;white-space:pre;transform:scaleX(0.89);transform-origin:100% 50%;">3</span>
<span style="left:469.16px;top:540px;font-size:9.6px;line-height:12px;color:#b4b4b4;white-space:pre;transform:scaleX(0.89);transform-origin:100% 50%;">4</span>
<span style="left:483.56px;top:540px;font-size:9.6px;line-height:12px;color:#b4b4b4;white-space:pre;transform:scaleX(0.89);transform-origin:100% 50%;">5</span>
<span style="left:498.16px;top:540px;font-size:9.6px;line-height:12px;color:#b4b4b4;white-space:pre;transform:scaleX(0.89);transform-origin:100% 50%;">6</span>
<div style="left:404.8px;top:551px;width:101px;height:1px;background:#a9a9a9;"></div>
<div style="left:436.6px;top:556px;width:37.2px;height:14px;background:linear-gradient(#fff,#f3f2ea 70%,#dddacb);border:1.2px solid #2b4f86;border-radius:3px;"></div>
<span style="left:442.95px;top:557px;font-size:9.6px;line-height:12px;color:#000;white-space:pre;transform:scaleX(0.9642);transform-origin:0 50%;">Today</span>
</div></body></html>
